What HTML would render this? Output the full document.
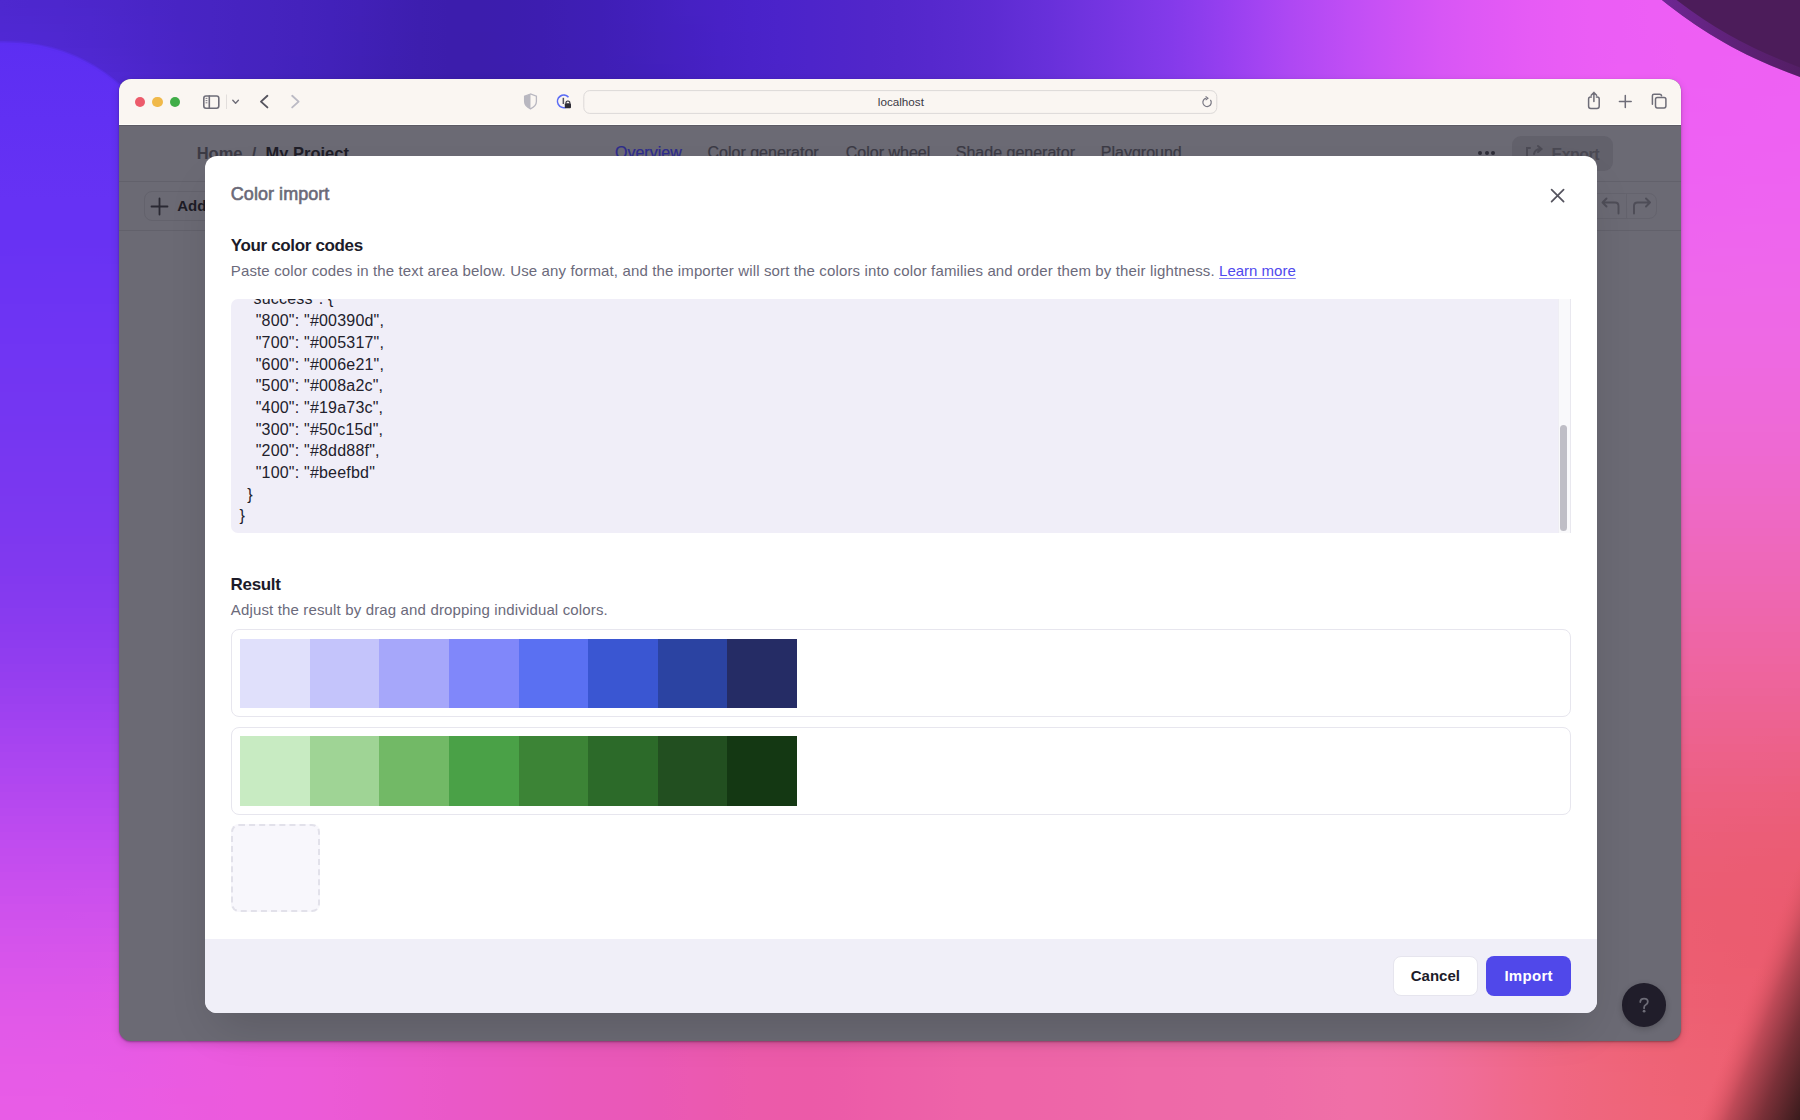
<!DOCTYPE html>
<html><head><meta charset="utf-8">
<style>
*{box-sizing:border-box;margin:0;padding:0}
html,body{width:1800px;height:1120px;overflow:hidden}
body{position:relative;-webkit-font-smoothing:antialiased;font-family:"Liberation Sans",sans-serif;background:#b048f0}
.a{position:absolute}
#bgs i{position:absolute;display:block}
.t{position:absolute;white-space:pre}
#bg{position:absolute;left:0;top:0;width:1800px;height:1120px;overflow:hidden;
background:
 radial-gradient(ellipse 520px 140px at 420px 70px, rgba(50,22,150,0.9), rgba(50,22,150,0) 100%),
 linear-gradient(128deg, #4a24c8 0%, #6a30f2 22%, #9a40f4 40%, #d452ec 55%, #ee5ae0 70%, #ee62b0 85%, #e85870 100%);
}
#win{left:119px;top:79px;width:1562px;height:962px;border-radius:12px;overflow:hidden;background:#6b6a74;
 box-shadow:0 1px 2px rgba(0,0,0,0.3),0 3px 8px rgba(0,0,0,0.14)}
#tb{left:119px;top:79px;width:1562px;height:45.5px;background:#faf6f2;border-radius:12px 12px 0 0;border-bottom:1px solid #fffefb;box-shadow:0 1px 0 #5c5a64}
.hl{left:119px;width:1562px;height:1px;background:#62616b}
#modal{left:204.5px;top:156px;width:1392.5px;height:857px;background:#fff;border-radius:12px;box-shadow:0 22px 44px -12px rgba(0,0,0,0.16)}
#foot{left:204.5px;top:939px;width:1392.5px;height:74px;background:#f0eff8;border-radius:0 0 12px 12px}
.sw{position:absolute;top:0;width:69.6px;height:69.5px}
</style></head>
<body>
<!--BG--><div id="bgs" class="a" style="left:0;top:0;width:1800px;height:1120px;overflow:hidden"><i style="left:0px;top:0px;width:1800px;height:8px;background:linear-gradient(90deg,#4e28cf 0px,#4d27ce 30px,#4d27cd 60px,#4c26cb 90px,#4b26c9 120px,#4925c6 150px,#4824c4 180px,#4724c2 210px,#4623c0 240px,#4523be 270px,#4422bc 300px,#4221ba 330px,#4120b7 360px,#3f1fb3 390px,#3d1eaf 420px,#3c1dad 450px,#3c1dad 480px,#3c1dae 510px,#3d1db0 540px,#3e1eb3 570px,#3f1eb6 600px,#411fba 630px,#4320be 660px,#4621c3 690px,#4821c6 720px,#4922c9 750px,#4b23ca 780px,#4d24ca 810px,#4f25ca 840px,#5126ca 870px,#5327cb 900px,#5628cd 930px,#592acf 960px,#5d2bd2 990px,#622ed6 1020px,#6830da 1050px,#6f33de 1080px,#7635e2 1110px,#7d38e6 1140px,#843aea 1170px,#8d3ded 1200px,#9840f0 1230px,#a344f2 1260px,#ae48f3 1290px,#b74bf4 1320px,#c04ef5 1350px,#c851f5 1380px,#d053f5 1410px,#d756f5 1440px,#dd58f5 1470px,#e259f5 1500px,#e65bf5 1530px,#e95cf5 1560px,#eb5df5 1590px,#ec5df5 1620px,#ed5ef5 1650px,#ed5ef5 1680px,#ee5ff4 1710px,#ee5ff4 1740px,#ee5ff4 1770px,#ee60f4 1800px)"></i><i style="left:0px;top:8px;width:1800px;height:8px;background:linear-gradient(90deg,#4e28d0 0px,#4e27cf 30px,#4d27ce 60px,#4c27cc 90px,#4b26c9 120px,#4925c7 150px,#4824c4 180px,#4724c2 210px,#4623c0 240px,#4523be 270px,#4422bc 300px,#4221ba 330px,#4120b7 360px,#3f1fb2 390px,#3d1eaf 420px,#3c1dad 450px,#3c1dad 480px,#3c1dae 510px,#3d1db0 540px,#3e1eb3 570px,#3f1eb6 600px,#411fba 630px,#4320be 660px,#4621c3 690px,#4821c6 720px,#4922c9 750px,#4b23ca 780px,#4d24ca 810px,#4f25ca 840px,#5126ca 870px,#5327cb 900px,#5628cd 930px,#592acf 960px,#5d2bd2 990px,#622ed6 1020px,#6830da 1050px,#6f33de 1080px,#7635e2 1110px,#7d38e6 1140px,#843aea 1170px,#8d3ded 1200px,#9840f0 1230px,#a344f2 1260px,#ae48f3 1290px,#b74bf4 1320px,#c04ef5 1350px,#c851f5 1380px,#d053f5 1410px,#d756f5 1440px,#dd58f5 1470px,#e259f5 1500px,#e65bf5 1530px,#e95cf5 1560px,#eb5df5 1590px,#ec5df5 1620px,#ed5ef5 1650px,#ee5ef5 1680px,#ee5ff4 1710px,#ee5ff4 1740px,#ee5ff4 1770px,#ee60f4 1800px)"></i><i style="left:0px;top:16px;width:1800px;height:8px;background:linear-gradient(90deg,#4f28d1 0px,#4e28d0 30px,#4e27ce 60px,#4d27cd 90px,#4b26ca 120px,#4a25c7 150px,#4824c4 180px,#4724c2 210px,#4623c0 240px,#4523be 270px,#4422bc 300px,#4221ba 330px,#4120b6 360px,#3f1fb2 390px,#3d1eaf 420px,#3c1dad 450px,#3c1dad 480px,#3c1dae 510px,#3d1db0 540px,#3e1eb3 570px,#3f1eb6 600px,#411fba 630px,#4320be 660px,#4521c2 690px,#4821c6 720px,#4922c9 750px,#4b23ca 780px,#4d24ca 810px,#4f25ca 840px,#5126ca 870px,#5327cb 900px,#5628cd 930px,#592acf 960px,#5d2bd2 990px,#622ed6 1020px,#6830da 1050px,#6f33de 1080px,#7635e2 1110px,#7d38e6 1140px,#843aea 1170px,#8d3ded 1200px,#9840f0 1230px,#a344f2 1260px,#ae48f3 1290px,#b74bf4 1320px,#c04ef5 1350px,#c851f5 1380px,#d053f5 1410px,#d756f5 1440px,#dd58f5 1470px,#e259f5 1500px,#e65bf5 1530px,#e95cf5 1560px,#eb5df5 1590px,#ec5df5 1620px,#ed5ef5 1650px,#ee5ef5 1680px,#ee5ff4 1710px,#ee5ff4 1740px,#ee5ff4 1770px,#ee60f4 1800px)"></i><i style="left:0px;top:24px;width:1800px;height:8px;background:linear-gradient(90deg,#4f28d2 0px,#4f28d1 30px,#4e28cf 60px,#4d27cd 90px,#4c26cb 120px,#4a25c8 150px,#4824c5 180px,#4724c2 210px,#4623c0 240px,#4523be 270px,#4422bc 300px,#4221ba 330px,#4120b6 360px,#3f1fb2 390px,#3d1eaf 420px,#3c1dad 450px,#3c1dad 480px,#3c1dae 510px,#3d1db0 540px,#3e1eb3 570px,#3f1eb6 600px,#411fb9 630px,#4320be 660px,#4520c2 690px,#4821c6 720px,#4922c9 750px,#4b23ca 780px,#4d24ca 810px,#4f25ca 840px,#5126ca 870px,#5327cb 900px,#5628cd 930px,#592acf 960px,#5d2bd2 990px,#622ed6 1020px,#6830da 1050px,#6f33de 1080px,#7635e2 1110px,#7d38e6 1140px,#843aea 1170px,#8d3ded 1200px,#9840f0 1230px,#a344f2 1260px,#ae48f3 1290px,#b74bf4 1320px,#c04ef5 1350px,#c851f5 1380px,#d053f5 1410px,#d756f5 1440px,#dd58f5 1470px,#e259f5 1500px,#e65bf5 1530px,#e95cf5 1560px,#eb5df5 1590px,#ec5df5 1620px,#ed5ef5 1650px,#ee5ef5 1680px,#ee5ff4 1710px,#ee5ff4 1740px,#ee60f4 1770px,#ee60f4 1800px)"></i><i style="left:0px;top:32px;width:1800px;height:8px;background:linear-gradient(90deg,#5028d3 0px,#4f28d2 30px,#4f28d0 60px,#4d27ce 90px,#4c26cb 120px,#4a25c8 150px,#4924c5 180px,#4724c2 210px,#4623c0 240px,#4523be 270px,#4422bc 300px,#4221ba 330px,#4020b6 360px,#3f1fb2 390px,#3d1eae 420px,#3c1dad 450px,#3c1dac 480px,#3c1dae 510px,#3d1db0 540px,#3e1eb3 570px,#3f1eb6 600px,#411fb9 630px,#4320bd 660px,#4520c2 690px,#4721c6 720px,#4922c8 750px,#4b23ca 780px,#4d24ca 810px,#4f25ca 840px,#5126ca 870px,#5327cb 900px,#5628cd 930px,#592acf 960px,#5d2bd2 990px,#622ed6 1020px,#6830da 1050px,#6f33de 1080px,#7635e2 1110px,#7d38e6 1140px,#843aea 1170px,#8d3ded 1200px,#9840f0 1230px,#a344f2 1260px,#ae48f3 1290px,#b74bf4 1320px,#c04ef5 1350px,#c851f5 1380px,#d053f5 1410px,#d756f5 1440px,#dd58f5 1470px,#e259f5 1500px,#e65bf5 1530px,#e95cf5 1560px,#eb5df5 1590px,#ec5df5 1620px,#ed5ef5 1650px,#ee5ef4 1680px,#ee5ff4 1710px,#ee5ff4 1740px,#ee60f4 1770px,#ee60f3 1800px)"></i><i style="left:0px;top:40px;width:1800px;height:8px;background:linear-gradient(90deg,#5029d4 0px,#5029d3 30px,#4f28d1 60px,#4e27cf 90px,#4c27cc 120px,#4b26c9 150px,#4925c5 180px,#4724c2 210px,#4623c0 240px,#4523be 270px,#4422bc 300px,#4221b9 330px,#4020b6 360px,#3e1fb2 390px,#3d1eae 420px,#3c1dac 450px,#3c1dac 480px,#3c1dae 510px,#3d1db0 540px,#3e1eb3 570px,#3f1eb5 600px,#411fb9 630px,#4320bd 660px,#4520c2 690px,#4721c6 720px,#4922c8 750px,#4b23ca 780px,#4d24ca 810px,#4f25ca 840px,#5126ca 870px,#5327cb 900px,#5628cd 930px,#592acf 960px,#5d2bd2 990px,#622ed6 1020px,#6830da 1050px,#6f33de 1080px,#7635e2 1110px,#7d38e6 1140px,#843aea 1170px,#8d3ded 1200px,#9840f0 1230px,#a344f2 1260px,#ae48f3 1290px,#b74bf4 1320px,#c04ef5 1350px,#c851f5 1380px,#d053f5 1410px,#d756f5 1440px,#dd58f5 1470px,#e259f5 1500px,#e65bf5 1530px,#e95cf5 1560px,#eb5df5 1590px,#ec5ef5 1620px,#ed5ef5 1650px,#ee5ff4 1680px,#ee5ff4 1710px,#ee5ff4 1740px,#ee60f4 1770px,#ee60f3 1800px)"></i><i style="left:0px;top:48px;width:1800px;height:8px;background:linear-gradient(90deg,#5129d5 0px,#5129d4 30px,#5028d3 60px,#4f28d0 90px,#4d27cd 120px,#4b26c9 150px,#4925c6 180px,#4724c3 210px,#4623c0 240px,#4523be 270px,#4422bc 300px,#4221b9 330px,#4020b6 360px,#3e1fb2 390px,#3d1eae 420px,#3c1dac 450px,#3c1dac 480px,#3c1dae 510px,#3d1db0 540px,#3e1eb2 570px,#3f1eb5 600px,#411fb9 630px,#4320bd 660px,#4520c2 690px,#4721c6 720px,#4922c8 750px,#4b23ca 780px,#4d24ca 810px,#4f25ca 840px,#5126ca 870px,#5327cb 900px,#5628cd 930px,#592acf 960px,#5d2bd2 990px,#622ed6 1020px,#6830da 1050px,#6f33de 1080px,#7635e2 1110px,#7d38e6 1140px,#843aea 1170px,#8d3ded 1200px,#9840f0 1230px,#a344f2 1260px,#ae48f3 1290px,#b74bf4 1320px,#c04ef5 1350px,#c851f5 1380px,#d053f5 1410px,#d756f5 1440px,#dd58f5 1470px,#e259f5 1500px,#e65bf5 1530px,#e95cf5 1560px,#eb5df5 1590px,#ec5ef5 1620px,#ed5ef5 1650px,#ee5ff4 1680px,#ee5ff4 1710px,#ee5ff4 1740px,#ee60f4 1770px,#ee60f3 1800px)"></i><i style="left:0px;top:56px;width:1800px;height:8px;background:linear-gradient(90deg,#5229d6 0px,#5129d6 30px,#5129d4 60px,#4f28d1 90px,#4e27ce 120px,#4b26ca 150px,#4925c6 180px,#4724c3 210px,#4623c0 240px,#4523be 270px,#4322bc 300px,#4221b9 330px,#4020b5 360px,#3e1fb1 390px,#3d1eae 420px,#3c1dac 450px,#3c1dac 480px,#3c1dae 510px,#3d1db0 540px,#3e1eb2 570px,#3f1eb5 600px,#401fb9 630px,#4320bd 660px,#4520c1 690px,#4721c5 720px,#4922c8 750px,#4b23ca 780px,#4d24ca 810px,#4f25ca 840px,#5126ca 870px,#5327cb 900px,#5628cd 930px,#592acf 960px,#5d2bd2 990px,#622ed6 1020px,#6830da 1050px,#6f33de 1080px,#7635e2 1110px,#7d38e6 1140px,#843aea 1170px,#8d3ded 1200px,#9840f0 1230px,#a344f2 1260px,#ae48f3 1290px,#b74bf4 1320px,#c04ef5 1350px,#c851f5 1380px,#d053f5 1410px,#d756f5 1440px,#dd58f5 1470px,#e259f5 1500px,#e65bf5 1530px,#e95cf5 1560px,#eb5df5 1590px,#ec5ef5 1620px,#ed5ef5 1650px,#ee5ff4 1680px,#ee5ff4 1710px,#ee60f4 1740px,#ee60f4 1770px,#ee60f3 1800px)"></i><i style="left:0px;top:64px;width:1800px;height:8px;background:linear-gradient(90deg,#532ad8 0px,#522ad7 30px,#5129d5 60px,#5028d3 90px,#4e27cf 120px,#4c26cb 150px,#4a25c7 180px,#4824c3 210px,#4623c0 240px,#4523be 270px,#4322bc 300px,#4221b9 330px,#4020b5 360px,#3e1fb1 390px,#3d1eae 420px,#3c1dac 450px,#3c1dac 480px,#3c1dad 510px,#3d1db0 540px,#3e1eb2 570px,#3f1eb5 600px,#401fb8 630px,#421fbd 660px,#4520c1 690px,#4721c5 720px,#4922c8 750px,#4b23c9 780px,#4d24ca 810px,#4f25ca 840px,#5126ca 870px,#5327cb 900px,#5628cd 930px,#592acf 960px,#5d2bd2 990px,#622ed6 1020px,#6830da 1050px,#6f33de 1080px,#7635e2 1110px,#7d38e6 1140px,#843aea 1170px,#8d3ded 1200px,#9840f0 1230px,#a344f2 1260px,#ae48f3 1290px,#b74bf4 1320px,#c04ef5 1350px,#c851f5 1380px,#d053f5 1410px,#d756f5 1440px,#dd58f5 1470px,#e259f5 1500px,#e65bf5 1530px,#e95cf5 1560px,#eb5df5 1590px,#ed5ef5 1620px,#ed5ef5 1650px,#ee5ff4 1680px,#ee5ff4 1710px,#ee60f4 1740px,#ee60f3 1770px,#ee60f3 1800px)"></i><i style="left:0px;top:72px;width:1800px;height:8px;background:linear-gradient(90deg,#542ad9 0px,#532ad9 30px,#5229d7 60px,#5129d4 90px,#4f28d1 120px,#4d26cc 150px,#4a25c8 180px,#4824c4 210px,#4623c1 240px,#4523be 270px,#4322bc 300px,#4221b9 330px,#4020b5 360px,#3e1fb1 390px,#3d1eae 420px,#3c1dac 450px,#3b1dac 480px,#3c1dad 510px,#3d1db0 540px,#3e1eb2 570px,#3f1eb5 600px,#401fb8 630px,#421fbc 660px,#4520c1 690px,#4721c5 720px,#4922c8 750px,#4b23c9 780px,#4d24ca 810px,#4f25ca 840px,#5126ca 870px,#5327cb 900px,#5628cd 930px,#592acf 960px,#5d2bd2 990px,#622ed6 1020px,#6830da 1050px,#6f33de 1080px,#7635e2 1110px,#7d38e6 1140px,#843aea 1170px,#8d3ded 1200px,#9840f0 1230px,#a344f2 1260px,#ae48f3 1290px,#b74bf4 1320px,#c04ef5 1350px,#c851f5 1380px,#d053f5 1410px,#d756f5 1440px,#dd58f5 1470px,#e259f5 1500px,#e65bf5 1530px,#e95cf5 1560px,#eb5df5 1590px,#ed5ef5 1620px,#ed5ef4 1650px,#ee5ff4 1680px,#ee5ff4 1710px,#ee60f4 1740px,#ee60f3 1770px,#ee60f3 1800px)"></i><i style="left:0px;top:80px;width:1800px;height:8px;background:linear-gradient(90deg,#552bdb 0px,#542ada 30px,#532ad8 60px,#5229d6 90px,#5028d2 120px,#4d27cd 150px,#4a25c8 180px,#4824c4 210px,#4623c1 240px,#4523be 270px,#4322bc 300px,#4221b9 330px,#4020b5 360px,#3e1fb1 390px,#3c1eae 420px,#3c1dac 450px,#3b1dac 480px,#3c1dad 510px,#3d1db0 540px,#3e1eb2 570px,#3f1eb5 600px,#401fb8 630px,#421fbc 660px,#4520c1 690px,#4721c5 720px,#4922c8 750px,#4b23c9 780px,#4d24ca 810px,#4f25ca 840px,#5126ca 870px,#5327cb 900px,#5628cd 930px,#592acf 960px,#5d2bd2 990px,#622ed6 1020px,#6830da 1050px,#6f33de 1080px,#7635e2 1110px,#7d38e6 1140px,#843aea 1170px,#8d3ded 1200px,#9840f0 1230px,#a344f2 1260px,#ae48f3 1290px,#b74bf4 1320px,#c04ef5 1350px,#c851f5 1380px,#d053f5 1410px,#d756f5 1440px,#dd58f5 1470px,#e259f5 1500px,#e65bf5 1530px,#e95cf5 1560px,#eb5df5 1590px,#ed5ef5 1620px,#ed5ef4 1650px,#ee5ff4 1680px,#ee5ff4 1710px,#ee60f4 1740px,#ee60f3 1770px,#ee61f3 1800px)"></i><i style="left:0px;top:88px;width:1800px;height:8px;background:linear-gradient(90deg,#562bdd 0px,#552bdc 30px,#542ada 60px,#532ad7 90px,#5128d3 120px,#4e27cf 150px,#4b26c9 180px,#4824c5 210px,#4623c1 240px,#4523be 270px,#4322bc 300px,#4221b9 330px,#4020b5 360px,#3e1fb1 390px,#3c1ead 420px,#3c1dac 450px,#3b1dac 480px,#3c1dad 510px,#3d1daf 540px,#3e1eb2 570px,#3f1eb5 600px,#401fb8 630px,#421fbc 660px,#4420c0 690px,#4721c5 720px,#4922c8 750px,#4b23c9 780px,#4d24ca 810px,#4f25ca 840px,#5126ca 870px,#5327cb 900px,#5628cd 930px,#592acf 960px,#5d2bd2 990px,#622ed6 1020px,#6830da 1050px,#6f33de 1080px,#7635e2 1110px,#7d38e6 1140px,#843aea 1170px,#8d3ded 1200px,#9840f0 1230px,#a344f2 1260px,#ae48f3 1290px,#b74bf4 1320px,#c04ef5 1350px,#c851f5 1380px,#d053f5 1410px,#d756f5 1440px,#dd58f5 1470px,#e259f5 1500px,#e65bf5 1530px,#e95cf5 1560px,#eb5df5 1590px,#ed5ef5 1620px,#ed5ff4 1650px,#ee5ff4 1680px,#ee60f4 1710px,#ee60f3 1740px,#ee60f3 1770px,#ee61f3 1800px)"></i><i style="left:0px;top:96px;width:140px;height:8px;background:linear-gradient(90deg,#572bde 0px,#562bde 30px,#552bdc 60px,#542ad9 90px,#5229d5 120px,#5028d2 140px)"></i><i style="left:1660px;top:96px;width:140px;height:8px;background:linear-gradient(90deg,#ee5ff4 0px,#ee5ff4 30px,#ee60f4 60px,#ee60f3 90px,#ee61f3 120px,#ee61f3 140px)"></i><i style="left:0px;top:104px;width:140px;height:8px;background:linear-gradient(90deg,#582ce0 0px,#572cdf 30px,#562bde 60px,#552bdb 90px,#5329d7 120px,#5128d3 140px)"></i><i style="left:1660px;top:104px;width:140px;height:8px;background:linear-gradient(90deg,#ee5ff4 0px,#ee5ff4 30px,#ee60f3 60px,#ee60f3 90px,#ee61f3 120px,#ee61f3 140px)"></i><i style="left:0px;top:112px;width:140px;height:8px;background:linear-gradient(90deg,#592ce2 0px,#582ce1 30px,#582ce0 60px,#562bdd 90px,#542ad9 120px,#5229d5 140px)"></i><i style="left:1660px;top:112px;width:140px;height:8px;background:linear-gradient(90deg,#ee5ff4 0px,#ee60f4 30px,#ee60f3 60px,#ee60f3 90px,#ee61f3 120px,#ee61f3 140px)"></i><i style="left:0px;top:120px;width:140px;height:8px;background:linear-gradient(90deg,#5a2de3 0px,#5a2de3 30px,#592ce1 60px,#582cdf 90px,#552bdb 120px,#532ad7 140px)"></i><i style="left:1660px;top:120px;width:140px;height:8px;background:linear-gradient(90deg,#ee5ff4 0px,#ee60f4 30px,#ee60f3 60px,#ee61f3 90px,#ee61f3 120px,#ee61f3 140px)"></i><i style="left:0px;top:128px;width:140px;height:8px;background:linear-gradient(90deg,#5b2de5 0px,#5b2de5 30px,#5a2de3 60px,#592ce1 90px,#572bdd 120px,#552ad9 140px)"></i><i style="left:1660px;top:128px;width:140px;height:8px;background:linear-gradient(90deg,#ee5ff4 0px,#ee60f3 30px,#ee60f3 60px,#ee61f3 90px,#ee61f3 120px,#ee61f2 140px)"></i><i style="left:0px;top:136px;width:140px;height:8px;background:linear-gradient(90deg,#5c2ee7 0px,#5c2ee6 30px,#5b2de5 60px,#5a2de3 90px,#582cdf 120px,#562bdc 140px)"></i><i style="left:1660px;top:136px;width:140px;height:8px;background:linear-gradient(90deg,#ee60f4 0px,#ee60f3 30px,#ee61f3 60px,#ee61f3 90px,#ee61f2 120px,#ee61f2 140px)"></i><i style="left:0px;top:144px;width:140px;height:8px;background:linear-gradient(90deg,#5d2ee8 0px,#5d2ee8 30px,#5d2ee7 60px,#5b2de5 90px,#5a2ce1 120px,#582bde 140px)"></i><i style="left:1660px;top:144px;width:140px;height:8px;background:linear-gradient(90deg,#ee60f4 0px,#ee60f3 30px,#ee61f3 60px,#ee61f2 90px,#ee61f2 120px,#ee62f2 140px)"></i><i style="left:0px;top:152px;width:140px;height:8px;background:linear-gradient(90deg,#5e2fea 0px,#5e2fe9 30px,#5e2ee8 60px,#5d2ee7 90px,#5b2de3 120px,#592ce0 140px)"></i><i style="left:1660px;top:152px;width:140px;height:8px;background:linear-gradient(90deg,#ee60f3 0px,#ee60f3 30px,#ee61f3 60px,#ee61f2 90px,#ee62f2 120px,#ee62f2 140px)"></i><i style="left:0px;top:160px;width:140px;height:8px;background:linear-gradient(90deg,#5f2feb 0px,#5f2feb 30px,#5f2fea 60px,#5e2ee8 90px,#5c2ee5 120px,#5b2de3 140px)"></i><i style="left:1660px;top:160px;width:140px;height:8px;background:linear-gradient(90deg,#ee60f3 0px,#ee61f3 30px,#ee61f2 60px,#ee62f2 90px,#ee62f2 120px,#ee62f2 140px)"></i><i style="left:0px;top:168px;width:140px;height:8px;background:linear-gradient(90deg,#6030ec 0px,#6030ec 30px,#602fec 60px,#5f2fea 90px,#5e2ee7 120px,#5c2ee5 140px)"></i><i style="left:1660px;top:168px;width:140px;height:8px;background:linear-gradient(90deg,#ee60f3 0px,#ee61f2 30px,#ee61f2 60px,#ee62f2 90px,#ee62f1 120px,#ee62f1 140px)"></i><i style="left:0px;top:176px;width:140px;height:8px;background:linear-gradient(90deg,#6130ee 0px,#6130ed 30px,#6130ed 60px,#612fec 90px,#5f2fe9 120px,#5e2ee7 140px)"></i><i style="left:1660px;top:176px;width:140px;height:8px;background:linear-gradient(90deg,#ee61f3 0px,#ee61f2 30px,#ee62f2 60px,#ee62f1 90px,#ee62f1 120px,#ee63f1 140px)"></i><i style="left:0px;top:184px;width:140px;height:8px;background:linear-gradient(90deg,#6230ef 0px,#6230ee 30px,#6230ee 60px,#6230ed 90px,#612feb 120px,#5f2fe9 140px)"></i><i style="left:1660px;top:184px;width:140px;height:8px;background:linear-gradient(90deg,#ee61f2 0px,#ee62f2 30px,#ee62f1 60px,#ee63f1 90px,#ee63f1 120px,#ee63f1 140px)"></i><i style="left:0px;top:192px;width:140px;height:8px;background:linear-gradient(90deg,#6331ef 0px,#6331ef 30px,#6331ef 60px,#6330ee 90px,#6230ec 120px,#612feb 140px)"></i><i style="left:1660px;top:192px;width:140px;height:8px;background:linear-gradient(90deg,#ee61f2 0px,#ee62f1 30px,#ee62f1 60px,#ee63f1 90px,#ee63f0 120px,#ee63f0 140px)"></i><i style="left:0px;top:200px;width:140px;height:8px;background:linear-gradient(90deg,#6431f0 0px,#6431f0 30px,#6431f0 60px,#6431ef 90px,#6330ee 120px,#6230ec 140px)"></i><i style="left:1660px;top:200px;width:140px;height:8px;background:linear-gradient(90deg,#ee62f1 0px,#ee62f1 30px,#ee63f0 60px,#ee63f0 90px,#ee64f0 120px,#ee64f0 140px)"></i><i style="left:0px;top:208px;width:140px;height:8px;background:linear-gradient(90deg,#6531f1 0px,#6531f1 30px,#6531f1 60px,#6531f0 90px,#6431ef 120px,#6330ee 140px)"></i><i style="left:1660px;top:208px;width:140px;height:8px;background:linear-gradient(90deg,#ee62f1 0px,#ee63f0 30px,#ee63f0 60px,#ee64f0 90px,#ee64ef 120px,#ee64ef 140px)"></i><i style="left:0px;top:216px;width:140px;height:8px;background:linear-gradient(90deg,#6631f1 0px,#6631f1 30px,#6631f1 60px,#6631f1 90px,#6531f0 120px,#6531ef 140px)"></i><i style="left:1660px;top:216px;width:140px;height:8px;background:linear-gradient(90deg,#ee63f0 0px,#ee63f0 30px,#ee64ef 60px,#ee64ef 90px,#ee64ef 120px,#ee64ef 140px)"></i><i style="left:0px;top:224px;width:140px;height:8px;background:linear-gradient(90deg,#6632f2 0px,#6732f2 30px,#6732f2 60px,#6632f1 90px,#6631f1 120px,#6631f0 140px)"></i><i style="left:1660px;top:224px;width:140px;height:8px;background:linear-gradient(90deg,#ee63f0 0px,#ee64ef 30px,#ee64ef 60px,#ee65ef 90px,#ee65ee 120px,#ee65ee 140px)"></i><i style="left:0px;top:232px;width:140px;height:8px;background:linear-gradient(90deg,#6732f2 0px,#6732f2 30px,#6732f2 60px,#6732f2 90px,#6732f1 120px,#6732f1 140px)"></i><i style="left:1660px;top:232px;width:140px;height:8px;background:linear-gradient(90deg,#ee64ef 0px,#ee64ef 30px,#ee65ee 60px,#ee65ee 90px,#ee65ee 120px,#ee65ee 140px)"></i><i style="left:0px;top:240px;width:140px;height:8px;background:linear-gradient(90deg,#6832f3 0px,#6832f3 30px,#6832f3 60px,#6832f2 90px,#6832f2 120px,#6732f1 140px)"></i><i style="left:1660px;top:240px;width:140px;height:8px;background:linear-gradient(90deg,#ee64ee 0px,#ee65ee 30px,#ee65ed 60px,#ee65ed 90px,#ee66ed 120px,#ee66ed 140px)"></i><i style="left:0px;top:248px;width:140px;height:8px;background:linear-gradient(90deg,#6832f3 0px,#6932f3 30px,#6932f3 60px,#6932f3 90px,#6932f2 120px,#6832f2 140px)"></i><i style="left:1660px;top:248px;width:140px;height:8px;background:linear-gradient(90deg,#ee65ed 0px,#ee65ed 30px,#ee66ed 60px,#ee66ed 90px,#ee66ec 120px,#ee66ec 140px)"></i><i style="left:0px;top:256px;width:140px;height:8px;background:linear-gradient(90deg,#6933f3 0px,#6933f3 30px,#6933f3 60px,#6933f3 90px,#6932f3 120px,#6932f2 140px)"></i><i style="left:1660px;top:256px;width:140px;height:8px;background:linear-gradient(90deg,#ee65ed 0px,#ee66ec 30px,#ee66ec 60px,#ee66ec 90px,#ee66ec 120px,#ee66ec 140px)"></i><i style="left:0px;top:264px;width:140px;height:8px;background:linear-gradient(90deg,#6a33f3 0px,#6a33f3 30px,#6a33f3 60px,#6a33f3 90px,#6a33f3 120px,#6a33f3 140px)"></i><i style="left:1660px;top:264px;width:140px;height:8px;background:linear-gradient(90deg,#ee66ec 0px,#ee66ec 30px,#ee66eb 60px,#ee67eb 90px,#ee67eb 120px,#ee67eb 140px)"></i><i style="left:0px;top:272px;width:140px;height:8px;background:linear-gradient(90deg,#6a33f3 0px,#6a33f3 30px,#6b33f3 60px,#6b33f3 90px,#6b33f3 120px,#6a33f3 140px)"></i><i style="left:1660px;top:272px;width:140px;height:8px;background:linear-gradient(90deg,#ee66eb 0px,#ee67eb 30px,#ee67eb 60px,#ee67ea 90px,#ee67ea 120px,#ee67ea 140px)"></i><i style="left:0px;top:280px;width:140px;height:8px;background:linear-gradient(90deg,#6b33f3 0px,#6b33f3 30px,#6b33f3 60px,#6b33f3 90px,#6b33f3 120px,#6b33f3 140px)"></i><i style="left:1660px;top:280px;width:140px;height:8px;background:linear-gradient(90deg,#ee67ea 0px,#ee67ea 30px,#ee67ea 60px,#ee67ea 90px,#ee67ea 120px,#ee67e9 140px)"></i><i style="left:0px;top:288px;width:140px;height:8px;background:linear-gradient(90deg,#6c33f3 0px,#6c33f3 30px,#6c33f3 60px,#6c33f3 90px,#6c33f3 120px,#6c33f3 140px)"></i><i style="left:1660px;top:288px;width:140px;height:8px;background:linear-gradient(90deg,#ee67e9 0px,#ee67e9 30px,#ee67e9 60px,#ee68e9 90px,#ee68e9 120px,#ee68e9 140px)"></i><i style="left:0px;top:296px;width:140px;height:8px;background:linear-gradient(90deg,#6c33f3 0px,#6c33f3 30px,#6c33f3 60px,#6c33f3 90px,#6c33f3 120px,#6c33f3 140px)"></i><i style="left:1660px;top:296px;width:140px;height:8px;background:linear-gradient(90deg,#ee68e8 0px,#ee68e8 30px,#ee68e8 60px,#ee68e8 90px,#ee68e8 120px,#ee68e8 140px)"></i><i style="left:0px;top:304px;width:140px;height:8px;background:linear-gradient(90deg,#6d34f3 0px,#6d34f3 30px,#6d34f3 60px,#6d34f3 90px,#6d34f3 120px,#6d34f3 140px)"></i><i style="left:1660px;top:304px;width:140px;height:8px;background:linear-gradient(90deg,#ee68e8 0px,#ee68e7 30px,#ee68e7 60px,#ee68e7 90px,#ee68e7 120px,#ee68e7 140px)"></i><i style="left:0px;top:312px;width:140px;height:8px;background:linear-gradient(90deg,#6d34f3 0px,#6d34f3 30px,#6e34f3 60px,#6e34f3 90px,#6e34f3 120px,#6e34f3 140px)"></i><i style="left:1660px;top:312px;width:140px;height:8px;background:linear-gradient(90deg,#ee68e7 0px,#ee68e7 30px,#ee68e6 60px,#ee68e6 90px,#ee68e6 120px,#ee68e6 140px)"></i><i style="left:0px;top:320px;width:140px;height:8px;background:linear-gradient(90deg,#6e34f3 0px,#6e34f3 30px,#6e34f3 60px,#6e34f3 90px,#6e34f3 120px,#6e34f3 140px)"></i><i style="left:1660px;top:320px;width:140px;height:8px;background:linear-gradient(90deg,#ee68e6 0px,#ee68e6 30px,#ee68e6 60px,#ee68e6 90px,#ee68e6 120px,#ee68e5 140px)"></i><i style="left:0px;top:328px;width:140px;height:8px;background:linear-gradient(90deg,#6f34f3 0px,#6f34f3 30px,#6f34f3 60px,#6f34f3 90px,#6f34f3 120px,#6f34f3 140px)"></i><i style="left:1660px;top:328px;width:140px;height:8px;background:linear-gradient(90deg,#ee68e5 0px,#ee69e5 30px,#ee69e5 60px,#ee69e5 90px,#ee69e5 120px,#ee69e5 140px)"></i><i style="left:0px;top:336px;width:140px;height:8px;background:linear-gradient(90deg,#6f34f3 0px,#6f34f3 30px,#6f34f3 60px,#6f34f3 90px,#6f34f3 120px,#6f34f3 140px)"></i><i style="left:1660px;top:336px;width:140px;height:8px;background:linear-gradient(90deg,#ee69e4 0px,#ee69e4 30px,#ee69e4 60px,#ee69e4 90px,#ee69e4 120px,#ee69e4 140px)"></i><i style="left:0px;top:344px;width:140px;height:8px;background:linear-gradient(90deg,#7035f3 0px,#7035f3 30px,#7035f3 60px,#7035f3 90px,#7035f3 120px,#7035f3 140px)"></i><i style="left:1660px;top:344px;width:140px;height:8px;background:linear-gradient(90deg,#ee69e3 0px,#ee69e3 30px,#ee69e3 60px,#ee69e3 90px,#ee69e3 120px,#ee69e3 140px)"></i><i style="left:0px;top:352px;width:140px;height:8px;background:linear-gradient(90deg,#7035f3 0px,#7035f3 30px,#7035f3 60px,#7035f3 90px,#7035f3 120px,#7035f3 140px)"></i><i style="left:1660px;top:352px;width:140px;height:8px;background:linear-gradient(90deg,#ee69e2 0px,#ee69e2 30px,#ee69e2 60px,#ee69e2 90px,#ee69e2 120px,#ee69e2 140px)"></i><i style="left:0px;top:360px;width:140px;height:8px;background:linear-gradient(90deg,#7135f3 0px,#7135f3 30px,#7135f3 60px,#7135f3 90px,#7135f3 120px,#7135f3 140px)"></i><i style="left:1660px;top:360px;width:140px;height:8px;background:linear-gradient(90deg,#ee69e1 0px,#ee69e1 30px,#ee69e1 60px,#ee69e1 90px,#ee69e1 120px,#ee69e1 140px)"></i><i style="left:0px;top:368px;width:140px;height:8px;background:linear-gradient(90deg,#7235f2 0px,#7235f2 30px,#7235f2 60px,#7235f2 90px,#7235f2 120px,#7235f2 140px)"></i><i style="left:1660px;top:368px;width:140px;height:8px;background:linear-gradient(90deg,#ee69e0 0px,#ee69e0 30px,#ee69e0 60px,#ee69df 90px,#ee69df 120px,#ee69df 140px)"></i><i style="left:0px;top:376px;width:140px;height:8px;background:linear-gradient(90deg,#7235f2 0px,#7235f2 30px,#7235f2 60px,#7235f2 90px,#7235f2 120px,#7235f2 140px)"></i><i style="left:1660px;top:376px;width:140px;height:8px;background:linear-gradient(90deg,#ee69de 0px,#ee69de 30px,#ee69de 60px,#ee69de 90px,#ee69de 120px,#ee69de 140px)"></i><i style="left:0px;top:384px;width:140px;height:8px;background:linear-gradient(90deg,#7335f2 0px,#7335f2 30px,#7335f2 60px,#7335f2 90px,#7335f2 120px,#7335f2 140px)"></i><i style="left:1660px;top:384px;width:140px;height:8px;background:linear-gradient(90deg,#ee69dd 0px,#ee69dd 30px,#ee69dd 60px,#ee69dd 90px,#ee69dd 120px,#ee69dd 140px)"></i><i style="left:0px;top:392px;width:140px;height:8px;background:linear-gradient(90deg,#7336f2 0px,#7336f2 30px,#7336f2 60px,#7336f2 90px,#7336f2 120px,#7336f2 140px)"></i><i style="left:1660px;top:392px;width:140px;height:8px;background:linear-gradient(90deg,#ee69dc 0px,#ee69dc 30px,#ee69dc 60px,#ee69dc 90px,#ee69dc 120px,#ee69dc 140px)"></i><i style="left:0px;top:400px;width:140px;height:8px;background:linear-gradient(90deg,#7436f2 0px,#7436f2 30px,#7436f2 60px,#7436f2 90px,#7436f2 120px,#7436f2 140px)"></i><i style="left:1660px;top:400px;width:140px;height:8px;background:linear-gradient(90deg,#ee69db 0px,#ee69da 30px,#ee69da 60px,#ee69da 90px,#ee69da 120px,#ee69da 140px)"></i><i style="left:0px;top:408px;width:140px;height:8px;background:linear-gradient(90deg,#7436f2 0px,#7436f2 30px,#7436f2 60px,#7436f2 90px,#7436f2 120px,#7436f2 140px)"></i><i style="left:1660px;top:408px;width:140px;height:8px;background:linear-gradient(90deg,#ee69d9 0px,#ee69d9 30px,#ee69d9 60px,#ee69d9 90px,#ee69d9 120px,#ee69d9 140px)"></i><i style="left:0px;top:416px;width:140px;height:8px;background:linear-gradient(90deg,#7536f2 0px,#7536f2 30px,#7536f2 60px,#7536f2 90px,#7536f2 120px,#7536f2 140px)"></i><i style="left:1660px;top:416px;width:140px;height:8px;background:linear-gradient(90deg,#ee69d8 0px,#ee69d8 30px,#ee69d8 60px,#ee69d8 90px,#ee69d8 120px,#ee69d8 140px)"></i><i style="left:0px;top:424px;width:140px;height:8px;background:linear-gradient(90deg,#7536f1 0px,#7536f1 30px,#7536f1 60px,#7536f1 90px,#7536f1 120px,#7536f1 140px)"></i><i style="left:1660px;top:424px;width:140px;height:8px;background:linear-gradient(90deg,#ee6ad6 0px,#ee6ad6 30px,#ee6ad6 60px,#ee6ad6 90px,#ee6ad6 120px,#ee6ad6 140px)"></i><i style="left:0px;top:432px;width:140px;height:8px;background:linear-gradient(90deg,#7636f1 0px,#7636f1 30px,#7636f1 60px,#7636f1 90px,#7636f1 120px,#7636f1 140px)"></i><i style="left:1660px;top:432px;width:140px;height:8px;background:linear-gradient(90deg,#ee69d5 0px,#ee69d5 30px,#ee69d5 60px,#ee69d5 90px,#ee69d5 120px,#ee69d5 140px)"></i><i style="left:0px;top:440px;width:140px;height:8px;background:linear-gradient(90deg,#7637f1 0px,#7637f1 30px,#7637f1 60px,#7637f1 90px,#7637f1 120px,#7637f1 140px)"></i><i style="left:1660px;top:440px;width:140px;height:8px;background:linear-gradient(90deg,#ee69d3 0px,#ee69d3 30px,#ee69d3 60px,#ee69d3 90px,#ee69d3 120px,#ee69d3 140px)"></i><i style="left:0px;top:448px;width:140px;height:8px;background:linear-gradient(90deg,#7737f1 0px,#7737f1 30px,#7737f1 60px,#7737f1 90px,#7737f1 120px,#7737f1 140px)"></i><i style="left:1660px;top:448px;width:140px;height:8px;background:linear-gradient(90deg,#ee69d2 0px,#ee69d2 30px,#ee69d2 60px,#ee69d2 90px,#ee69d2 120px,#ee69d2 140px)"></i><i style="left:0px;top:456px;width:140px;height:8px;background:linear-gradient(90deg,#7837f1 0px,#7837f1 30px,#7837f1 60px,#7837f1 90px,#7837f1 120px,#7837f1 140px)"></i><i style="left:1660px;top:456px;width:140px;height:8px;background:linear-gradient(90deg,#ee69d0 0px,#ee69d0 30px,#ee69d0 60px,#ee69d0 90px,#ee69d0 120px,#ee69d0 140px)"></i><i style="left:0px;top:464px;width:140px;height:8px;background:linear-gradient(90deg,#7837f1 0px,#7837f1 30px,#7837f1 60px,#7837f1 90px,#7837f1 120px,#7837f1 140px)"></i><i style="left:1660px;top:464px;width:140px;height:8px;background:linear-gradient(90deg,#ee69ce 0px,#ee69ce 30px,#ee69ce 60px,#ee69ce 90px,#ee69ce 120px,#ee69ce 140px)"></i><i style="left:0px;top:472px;width:140px;height:8px;background:linear-gradient(90deg,#7937f1 0px,#7937f1 30px,#7937f1 60px,#7937f1 90px,#7937f1 120px,#7937f1 140px)"></i><i style="left:1660px;top:472px;width:140px;height:8px;background:linear-gradient(90deg,#ee69cd 0px,#ee69cd 30px,#ee69cd 60px,#ee69cd 90px,#ee69cd 120px,#ee69cd 140px)"></i><i style="left:0px;top:480px;width:140px;height:8px;background:linear-gradient(90deg,#7937f0 0px,#7937f0 30px,#7937f0 60px,#7937f0 90px,#7937f0 120px,#7937f0 140px)"></i><i style="left:1660px;top:480px;width:140px;height:8px;background:linear-gradient(90deg,#ee69cb 0px,#ee69cb 30px,#ee69cb 60px,#ee69cb 90px,#ee69cb 120px,#ee69cb 140px)"></i><i style="left:0px;top:488px;width:140px;height:8px;background:linear-gradient(90deg,#7a37f0 0px,#7a37f0 30px,#7a37f0 60px,#7a37f0 90px,#7a37f0 120px,#7a37f0 140px)"></i><i style="left:1660px;top:488px;width:140px;height:8px;background:linear-gradient(90deg,#ee69c9 0px,#ee69c9 30px,#ee69c9 60px,#ee69c9 90px,#ee69c9 120px,#ee69c9 140px)"></i><i style="left:0px;top:496px;width:140px;height:8px;background:linear-gradient(90deg,#7a38f0 0px,#7a38f0 30px,#7a38f0 60px,#7a38f0 90px,#7a38f0 120px,#7a38f0 140px)"></i><i style="left:1660px;top:496px;width:140px;height:8px;background:linear-gradient(90deg,#ee69c7 0px,#ee69c7 30px,#ee69c7 60px,#ee69c7 90px,#ee69c7 120px,#ee69c7 140px)"></i><i style="left:0px;top:504px;width:140px;height:8px;background:linear-gradient(90deg,#7b38f0 0px,#7b38f0 30px,#7b38f0 60px,#7b38f0 90px,#7b38f0 120px,#7b38f0 140px)"></i><i style="left:1660px;top:504px;width:140px;height:8px;background:linear-gradient(90deg,#ee69c5 0px,#ee69c5 30px,#ee69c5 60px,#ee69c5 90px,#ee69c5 120px,#ee69c5 140px)"></i><i style="left:0px;top:512px;width:140px;height:8px;background:linear-gradient(90deg,#7c38f0 0px,#7c38f0 30px,#7c38f0 60px,#7c38f0 90px,#7c38f0 120px,#7c38f0 140px)"></i><i style="left:1660px;top:512px;width:140px;height:8px;background:linear-gradient(90deg,#ee69c4 0px,#ee69c4 30px,#ee69c4 60px,#ee69c4 90px,#ee69c4 120px,#ee69c4 140px)"></i><i style="left:0px;top:520px;width:140px;height:8px;background:linear-gradient(90deg,#7c38f0 0px,#7c38f0 30px,#7c38f0 60px,#7c38f0 90px,#7c38f0 120px,#7c38f0 140px)"></i><i style="left:1660px;top:520px;width:140px;height:8px;background:linear-gradient(90deg,#ee68c2 0px,#ee68c2 30px,#ee68c2 60px,#ee68c2 90px,#ee68c2 120px,#ee68c2 140px)"></i><i style="left:0px;top:528px;width:140px;height:8px;background:linear-gradient(90deg,#7d38f0 0px,#7d38f0 30px,#7d38f0 60px,#7d38f0 90px,#7d38f0 120px,#7d38f0 140px)"></i><i style="left:1660px;top:528px;width:140px;height:8px;background:linear-gradient(90deg,#ee68c0 0px,#ee68c0 30px,#ee68c0 60px,#ee68c0 90px,#ee68c0 120px,#ee68c0 140px)"></i><i style="left:0px;top:536px;width:140px;height:8px;background:linear-gradient(90deg,#7e38ef 0px,#7e38ef 30px,#7e38ef 60px,#7e38ef 90px,#7e38ef 120px,#7e38ef 140px)"></i><i style="left:1660px;top:536px;width:140px;height:8px;background:linear-gradient(90deg,#ee68be 0px,#ee68be 30px,#ee68be 60px,#ee68be 90px,#ee68be 120px,#ee68be 140px)"></i><i style="left:0px;top:544px;width:140px;height:8px;background:linear-gradient(90deg,#7f39ef 0px,#7f39ef 30px,#7f39ef 60px,#7f39ef 90px,#7f39ef 120px,#7f39ef 140px)"></i><i style="left:1660px;top:544px;width:140px;height:8px;background:linear-gradient(90deg,#ee68bc 0px,#ee68bc 30px,#ee68bc 60px,#ee68bc 90px,#ee68bc 120px,#ee68bc 140px)"></i><i style="left:0px;top:552px;width:140px;height:8px;background:linear-gradient(90deg,#8039ef 0px,#8039ef 30px,#8039ef 60px,#8039ef 90px,#8039ef 120px,#8039ef 140px)"></i><i style="left:1660px;top:552px;width:140px;height:8px;background:linear-gradient(90deg,#ee68ba 0px,#ee68ba 30px,#ee68ba 60px,#ee68ba 90px,#ee68ba 120px,#ee68ba 140px)"></i><i style="left:0px;top:560px;width:140px;height:8px;background:linear-gradient(90deg,#8039ef 0px,#8039ef 30px,#8039ef 60px,#8039ef 90px,#8039ef 120px,#8039ef 140px)"></i><i style="left:1660px;top:560px;width:140px;height:8px;background:linear-gradient(90deg,#ee67b8 0px,#ee67b8 30px,#ee67b8 60px,#ee67b8 90px,#ee67b8 120px,#ee67b8 140px)"></i><i style="left:0px;top:568px;width:140px;height:8px;background:linear-gradient(90deg,#8139ef 0px,#8139ef 30px,#8139ef 60px,#8139ef 90px,#8139ef 120px,#8139ef 140px)"></i><i style="left:1660px;top:568px;width:140px;height:8px;background:linear-gradient(90deg,#ee67b7 0px,#ee67b7 30px,#ee67b7 60px,#ee67b7 90px,#ee67b7 120px,#ee67b7 140px)"></i><i style="left:0px;top:576px;width:140px;height:8px;background:linear-gradient(90deg,#8339ef 0px,#8339ef 30px,#8339ef 60px,#8339ef 90px,#8339ef 120px,#8339ef 140px)"></i><i style="left:1660px;top:576px;width:140px;height:8px;background:linear-gradient(90deg,#ee67b5 0px,#ee67b5 30px,#ee67b5 60px,#ee67b5 90px,#ee67b5 120px,#ee67b5 140px)"></i><i style="left:0px;top:584px;width:140px;height:8px;background:linear-gradient(90deg,#843aef 0px,#843aef 30px,#843aef 60px,#843aef 90px,#843aef 120px,#843aef 140px)"></i><i style="left:1660px;top:584px;width:140px;height:8px;background:linear-gradient(90deg,#ee67b3 0px,#ee67b3 30px,#ee67b3 60px,#ee67b3 90px,#ee67b3 120px,#ee67b3 140px)"></i><i style="left:0px;top:592px;width:140px;height:8px;background:linear-gradient(90deg,#853aef 0px,#853aef 30px,#853aef 60px,#853aef 90px,#853aef 120px,#853aef 140px)"></i><i style="left:1660px;top:592px;width:140px;height:8px;background:linear-gradient(90deg,#ee67b1 0px,#ee67b1 30px,#ee67b1 60px,#ee67b1 90px,#ee67b1 120px,#ee67b1 140px)"></i><i style="left:0px;top:600px;width:140px;height:8px;background:linear-gradient(90deg,#863aef 0px,#863aef 30px,#863aef 60px,#863aef 90px,#863aef 120px,#863aef 140px)"></i><i style="left:1660px;top:600px;width:140px;height:8px;background:linear-gradient(90deg,#ee66af 0px,#ee66af 30px,#ee66af 60px,#ee66af 90px,#ee66af 120px,#ee66af 140px)"></i><i style="left:0px;top:608px;width:140px;height:8px;background:linear-gradient(90deg,#883bef 0px,#883bef 30px,#883bef 60px,#883bef 90px,#883bef 120px,#883bef 140px)"></i><i style="left:1660px;top:608px;width:140px;height:8px;background:linear-gradient(90deg,#ee66ad 0px,#ee66ad 30px,#ee66ad 60px,#ee66ad 90px,#ee66ad 120px,#ee66ad 140px)"></i><i style="left:0px;top:616px;width:140px;height:8px;background:linear-gradient(90deg,#893bef 0px,#893bef 30px,#893bef 60px,#893bef 90px,#893bef 120px,#893bef 140px)"></i><i style="left:1660px;top:616px;width:140px;height:8px;background:linear-gradient(90deg,#ee66ab 0px,#ee66ab 30px,#ee66ab 60px,#ee66ab 90px,#ee66ab 120px,#ee66ab 140px)"></i><i style="left:0px;top:624px;width:140px;height:8px;background:linear-gradient(90deg,#8b3bef 0px,#8b3bef 30px,#8b3bef 60px,#8b3bef 90px,#8b3bef 120px,#8b3bef 140px)"></i><i style="left:1660px;top:624px;width:140px;height:8px;background:linear-gradient(90deg,#ee66a9 0px,#ee66a9 30px,#ee66a9 60px,#ee66a9 90px,#ee66a9 120px,#ee66a9 140px)"></i><i style="left:0px;top:632px;width:140px;height:8px;background:linear-gradient(90deg,#8c3cef 0px,#8c3cef 30px,#8c3cef 60px,#8c3cef 90px,#8c3cef 120px,#8c3cef 140px)"></i><i style="left:1660px;top:632px;width:140px;height:8px;background:linear-gradient(90deg,#ee65a7 0px,#ee65a7 30px,#ee65a7 60px,#ee65a7 90px,#ee65a7 120px,#ee65a7 140px)"></i><i style="left:0px;top:640px;width:140px;height:8px;background:linear-gradient(90deg,#8e3cef 0px,#8e3cef 30px,#8e3cef 60px,#8e3cef 90px,#8e3cef 120px,#8e3cef 140px)"></i><i style="left:1660px;top:640px;width:140px;height:8px;background:linear-gradient(90deg,#ee65a5 0px,#ee65a5 30px,#ee65a5 60px,#ee65a5 90px,#ee65a5 120px,#ee65a5 140px)"></i><i style="left:0px;top:648px;width:140px;height:8px;background:linear-gradient(90deg,#903def 0px,#903def 30px,#903def 60px,#903def 90px,#903def 120px,#903def 140px)"></i><i style="left:1660px;top:648px;width:140px;height:8px;background:linear-gradient(90deg,#ee65a3 0px,#ee65a3 30px,#ee65a3 60px,#ee65a3 90px,#ee65a3 120px,#ee65a3 140px)"></i><i style="left:0px;top:656px;width:140px;height:8px;background:linear-gradient(90deg,#913def 0px,#913def 30px,#913def 60px,#913def 90px,#913def 120px,#913def 140px)"></i><i style="left:1660px;top:656px;width:140px;height:8px;background:linear-gradient(90deg,#ee65a1 0px,#ee65a1 30px,#ee65a1 60px,#ee65a1 90px,#ee65a1 120px,#ee65a1 140px)"></i><i style="left:0px;top:664px;width:140px;height:8px;background:linear-gradient(90deg,#933eef 0px,#933eef 30px,#933eef 60px,#933eef 90px,#933eef 120px,#933eef 140px)"></i><i style="left:1660px;top:664px;width:140px;height:8px;background:linear-gradient(90deg,#ee64a0 0px,#ee64a0 30px,#ee649f 60px,#ee649f 90px,#ee649f 120px,#ee649f 140px)"></i><i style="left:0px;top:672px;width:140px;height:8px;background:linear-gradient(90deg,#953eef 0px,#953eef 30px,#953eef 60px,#953eef 90px,#953eef 120px,#953eef 140px)"></i><i style="left:1660px;top:672px;width:140px;height:8px;background:linear-gradient(90deg,#ee649e 0px,#ee649e 30px,#ee649d 60px,#ee649d 90px,#ee649d 120px,#ee649d 140px)"></i><i style="left:0px;top:680px;width:140px;height:8px;background:linear-gradient(90deg,#973fef 0px,#973fef 30px,#973fef 60px,#973fef 90px,#973fef 120px,#973fef 140px)"></i><i style="left:1660px;top:680px;width:140px;height:8px;background:linear-gradient(90deg,#ee649c 0px,#ee649c 30px,#ee649b 60px,#ee649b 90px,#ee649b 120px,#ee649b 140px)"></i><i style="left:0px;top:688px;width:140px;height:8px;background:linear-gradient(90deg,#9940ef 0px,#9940ef 30px,#9940ef 60px,#9940ef 90px,#9940ef 120px,#9940ef 140px)"></i><i style="left:1660px;top:688px;width:140px;height:8px;background:linear-gradient(90deg,#ee649a 0px,#ee649a 30px,#ed6499 60px,#ed6499 90px,#ed6499 120px,#ed6399 140px)"></i><i style="left:0px;top:696px;width:140px;height:8px;background:linear-gradient(90deg,#9b40ef 0px,#9b40ef 30px,#9b40ef 60px,#9b40ef 90px,#9b40ef 120px,#9b40ef 140px)"></i><i style="left:1660px;top:696px;width:140px;height:8px;background:linear-gradient(90deg,#ed6398 0px,#ed6398 30px,#ed6397 60px,#ed6397 90px,#ed6397 120px,#ed6397 140px)"></i><i style="left:0px;top:704px;width:140px;height:8px;background:linear-gradient(90deg,#9d41f0 0px,#9d41f0 30px,#9d41f0 60px,#9d41f0 90px,#9d41f0 120px,#9d41f0 140px)"></i><i style="left:1660px;top:704px;width:140px;height:8px;background:linear-gradient(90deg,#ed6396 0px,#ed6396 30px,#ed6395 60px,#ed6395 90px,#ed6395 120px,#ed6395 140px)"></i><i style="left:0px;top:712px;width:140px;height:8px;background:linear-gradient(90deg,#9f41f0 0px,#9f41f0 30px,#9f41f0 60px,#9f41f0 90px,#a041f0 120px,#a041f0 140px)"></i><i style="left:1660px;top:712px;width:140px;height:8px;background:linear-gradient(90deg,#ed6394 0px,#ed6394 30px,#ed6393 60px,#ed6393 90px,#ed6393 120px,#ed6393 140px)"></i><i style="left:0px;top:720px;width:140px;height:8px;background:linear-gradient(90deg,#a242f0 0px,#a242f0 30px,#a242f0 60px,#a242f0 90px,#a242f0 120px,#a242f0 140px)"></i><i style="left:1660px;top:720px;width:140px;height:8px;background:linear-gradient(90deg,#ed6392 0px,#ed6292 30px,#ed6291 60px,#ed6291 90px,#ed6291 120px,#ed6290 140px)"></i><i style="left:0px;top:728px;width:140px;height:8px;background:linear-gradient(90deg,#a443f0 0px,#a443f0 30px,#a443f0 60px,#a443f0 90px,#a443f0 120px,#a443f0 140px)"></i><i style="left:1660px;top:728px;width:140px;height:8px;background:linear-gradient(90deg,#ed6290 0px,#ed6290 30px,#ed628f 60px,#ed628f 90px,#ed628e 120px,#ed628e 140px)"></i><i style="left:0px;top:736px;width:140px;height:8px;background:linear-gradient(90deg,#a643f0 0px,#a643f0 30px,#a643f0 60px,#a643f0 90px,#a643f0 120px,#a643f0 140px)"></i><i style="left:1660px;top:736px;width:140px;height:8px;background:linear-gradient(90deg,#ed628e 0px,#ed628e 30px,#ed628d 60px,#ed628d 90px,#ed618c 120px,#ed618c 140px)"></i><i style="left:0px;top:744px;width:140px;height:8px;background:linear-gradient(90deg,#a844f0 0px,#a844f0 30px,#a844f0 60px,#a844f0 90px,#a844f0 120px,#a844f0 140px)"></i><i style="left:1660px;top:744px;width:140px;height:8px;background:linear-gradient(90deg,#ed628c 0px,#ed618c 30px,#ed618b 60px,#ed618b 90px,#ed618a 120px,#ed618a 140px)"></i><i style="left:0px;top:752px;width:140px;height:8px;background:linear-gradient(90deg,#aa45f0 0px,#aa45f0 30px,#aa45f0 60px,#aa45f0 90px,#aa45f0 120px,#aa45f0 140px)"></i><i style="left:1660px;top:752px;width:140px;height:8px;background:linear-gradient(90deg,#ed618a 0px,#ed618a 30px,#ed6189 60px,#ed6189 90px,#ec6188 120px,#ec6187 140px)"></i><i style="left:0px;top:760px;width:140px;height:8px;background:linear-gradient(90deg,#ac45f0 0px,#ac45f0 30px,#ac45f0 60px,#ac45f0 90px,#ac45f0 120px,#ac45f0 140px)"></i><i style="left:1660px;top:760px;width:140px;height:8px;background:linear-gradient(90deg,#ed6188 0px,#ed6188 30px,#ec6187 60px,#ec6087 90px,#ec6086 120px,#ec6085 140px)"></i><i style="left:0px;top:768px;width:140px;height:8px;background:linear-gradient(90deg,#ae46f0 0px,#ae46f0 30px,#ae46f0 60px,#ae46f0 90px,#ae46f0 120px,#ae46f0 140px)"></i><i style="left:1660px;top:768px;width:140px;height:8px;background:linear-gradient(90deg,#ec6186 0px,#ec6086 30px,#ec6085 60px,#ec6085 90px,#ec6084 120px,#ec6083 140px)"></i><i style="left:0px;top:776px;width:140px;height:8px;background:linear-gradient(90deg,#b046f0 0px,#b046f0 30px,#b046f0 60px,#b046f0 90px,#b046ef 120px,#b046ef 140px)"></i><i style="left:1660px;top:776px;width:140px;height:8px;background:linear-gradient(90deg,#ec6084 0px,#ec6084 30px,#ec6083 60px,#ec6083 90px,#ec5f82 120px,#ec5f81 140px)"></i><i style="left:0px;top:784px;width:140px;height:8px;background:linear-gradient(90deg,#b247ef 0px,#b247ef 30px,#b247ef 60px,#b247ef 90px,#b247ef 120px,#b247ef 140px)"></i><i style="left:1660px;top:784px;width:140px;height:8px;background:linear-gradient(90deg,#ec6083 0px,#ec6082 30px,#ec5f82 60px,#ec5f81 90px,#ec5f80 120px,#ec5f7f 140px)"></i><i style="left:0px;top:792px;width:140px;height:8px;background:linear-gradient(90deg,#b448ef 0px,#b448ef 30px,#b448ef 60px,#b448ef 90px,#b448ef 120px,#b448ef 140px)"></i><i style="left:1660px;top:792px;width:140px;height:8px;background:linear-gradient(90deg,#ec5f81 0px,#ec5f80 30px,#ec5f80 60px,#ec5f7f 90px,#ec5f7e 120px,#ec5e7d 140px)"></i><i style="left:0px;top:800px;width:140px;height:8px;background:linear-gradient(90deg,#b648ef 0px,#b648ef 30px,#b648ef 60px,#b648ef 90px,#b648ef 120px,#b648ef 140px)"></i><i style="left:1660px;top:800px;width:140px;height:8px;background:linear-gradient(90deg,#ec5f7f 0px,#ec5f7f 30px,#ec5f7e 60px,#ec5f7d 90px,#ec5e7c 120px,#eb5e7c 140px)"></i><i style="left:0px;top:808px;width:140px;height:8px;background:linear-gradient(90deg,#b849ef 0px,#b849ef 30px,#b849ef 60px,#b849ef 90px,#b849ef 120px,#b849ef 140px)"></i><i style="left:1660px;top:808px;width:140px;height:8px;background:linear-gradient(90deg,#ec5f7e 0px,#ec5f7d 30px,#ec5e7c 60px,#ec5e7c 90px,#eb5e7b 120px,#eb5e7a 140px)"></i><i style="left:0px;top:816px;width:140px;height:8px;background:linear-gradient(90deg,#ba4aef 0px,#ba4aef 30px,#ba4aef 60px,#ba4aef 90px,#ba4aef 120px,#ba4aef 140px)"></i><i style="left:1660px;top:816px;width:140px;height:8px;background:linear-gradient(90deg,#ec5e7c 0px,#ec5e7c 30px,#ec5e7b 60px,#eb5e7a 90px,#eb5e79 120px,#eb5d79 140px)"></i><i style="left:0px;top:824px;width:140px;height:8px;background:linear-gradient(90deg,#bc4aef 0px,#bc4aef 30px,#bc4aef 60px,#bc4aef 90px,#bc4aef 120px,#bc4aef 140px)"></i><i style="left:1660px;top:824px;width:140px;height:8px;background:linear-gradient(90deg,#ec5e7b 0px,#ec5e7a 30px,#eb5e7a 60px,#eb5d79 90px,#eb5d78 120px,#eb5d77 140px)"></i><i style="left:0px;top:832px;width:140px;height:8px;background:linear-gradient(90deg,#be4bef 0px,#be4bef 30px,#be4bef 60px,#be4bef 90px,#be4bef 120px,#be4bef 140px)"></i><i style="left:1660px;top:832px;width:140px;height:8px;background:linear-gradient(90deg,#ec5e79 0px,#ec5e79 30px,#eb5d78 60px,#eb5d77 90px,#eb5d77 120px,#eb5d76 140px)"></i><i style="left:0px;top:840px;width:140px;height:8px;background:linear-gradient(90deg,#c04cef 0px,#c04cef 30px,#c04cef 60px,#c04cef 90px,#c04cef 120px,#c04cee 140px)"></i><i style="left:1660px;top:840px;width:140px;height:8px;background:linear-gradient(90deg,#ec5e78 0px,#eb5d78 30px,#eb5d77 60px,#eb5d76 90px,#eb5d75 120px,#eb5c75 140px)"></i><i style="left:0px;top:848px;width:140px;height:8px;background:linear-gradient(90deg,#c24cee 0px,#c24cee 30px,#c24cee 60px,#c24cee 90px,#c24cee 120px,#c24cee 140px)"></i><i style="left:1660px;top:848px;width:140px;height:8px;background:linear-gradient(90deg,#ec5d77 0px,#eb5d77 30px,#eb5d76 60px,#eb5d75 90px,#eb5c74 120px,#eb5c74 140px)"></i><i style="left:0px;top:856px;width:140px;height:8px;background:linear-gradient(90deg,#c34dee 0px,#c34dee 30px,#c34dee 60px,#c34dee 90px,#c44dee 120px,#c44dee 140px)"></i><i style="left:1660px;top:856px;width:140px;height:8px;background:linear-gradient(90deg,#ec5d76 0px,#eb5d75 30px,#eb5d75 60px,#eb5c74 90px,#eb5c73 120px,#eb5c73 140px)"></i><i style="left:0px;top:864px;width:140px;height:8px;background:linear-gradient(90deg,#c54dee 0px,#c54dee 30px,#c54eee 60px,#c54eee 90px,#c54eee 120px,#c64eee 140px)"></i><i style="left:1660px;top:864px;width:140px;height:8px;background:linear-gradient(90deg,#ec5d75 0px,#eb5d75 30px,#eb5d74 60px,#eb5c73 90px,#eb5c73 120px,#eb5c72 140px)"></i><i style="left:0px;top:872px;width:140px;height:8px;background:linear-gradient(90deg,#c74eee 0px,#c74eee 30px,#c74eee 60px,#c74eee 90px,#c74eee 120px,#c84eed 140px)"></i><i style="left:1660px;top:872px;width:140px;height:8px;background:linear-gradient(90deg,#ec5d74 0px,#eb5d74 30px,#eb5c73 60px,#eb5c73 90px,#eb5c72 120px,#ea5c71 140px)"></i><i style="left:0px;top:880px;width:140px;height:8px;background:linear-gradient(90deg,#c94fed 0px,#c94fed 30px,#c94fed 60px,#c94fed 90px,#c94fed 120px,#c94fed 140px)"></i><i style="left:1660px;top:880px;width:140px;height:8px;background:linear-gradient(90deg,#ec5d74 0px,#eb5d73 30px,#eb5c73 60px,#eb5c72 90px,#eb5c71 120px,#ea5b71 140px)"></i><i style="left:0px;top:888px;width:140px;height:8px;background:linear-gradient(90deg,#ca4fed 0px,#ca4fed 30px,#ca4fed 60px,#cb50ed 90px,#cb50ed 120px,#cb50ed 140px)"></i><i style="left:1660px;top:888px;width:140px;height:8px;background:linear-gradient(90deg,#ec5d73 0px,#eb5c73 30px,#eb5c72 60px,#eb5c71 90px,#eb5b71 120px,#ea5b70 140px)"></i><i style="left:0px;top:896px;width:140px;height:8px;background:linear-gradient(90deg,#cc50ed 0px,#cc50ed 30px,#cc50ed 60px,#cc50ed 90px,#cd50ed 120px,#cd50ec 140px)"></i><i style="left:1660px;top:896px;width:140px;height:8px;background:linear-gradient(90deg,#ec5d73 0px,#eb5c72 30px,#eb5c71 60px,#eb5c71 90px,#eb5b70 120px,#ea5b70 140px)"></i><i style="left:0px;top:904px;width:140px;height:8px;background:linear-gradient(90deg,#ce51ed 0px,#ce51ed 30px,#ce51ec 60px,#ce51ec 90px,#ce51ec 120px,#cf51ec 140px)"></i><i style="left:1660px;top:904px;width:140px;height:8px;background:linear-gradient(90deg,#ec5d72 0px,#eb5c72 30px,#eb5c71 60px,#eb5c70 90px,#eb5b70 120px,#ea5b6f 140px)"></i><i style="left:0px;top:912px;width:140px;height:8px;background:linear-gradient(90deg,#cf51ec 0px,#cf51ec 30px,#cf51ec 60px,#d052ec 90px,#d052ec 120px,#d152eb 140px)"></i><i style="left:1660px;top:912px;width:140px;height:8px;background:linear-gradient(90deg,#ec5d72 0px,#ec5c71 30px,#eb5c71 60px,#eb5c70 90px,#eb5b6f 120px,#ea5b6f 140px)"></i><i style="left:0px;top:920px;width:140px;height:8px;background:linear-gradient(90deg,#d152ec 0px,#d152ec 30px,#d152ec 60px,#d152ec 90px,#d252eb 120px,#d353eb 140px)"></i><i style="left:1660px;top:920px;width:140px;height:8px;background:linear-gradient(90deg,#ec5d72 0px,#ec5d71 30px,#eb5c70 60px,#eb5c70 90px,#eb5b6f 120px,#ea5b6f 140px)"></i><i style="left:0px;top:928px;width:140px;height:8px;background:linear-gradient(90deg,#d253ec 0px,#d253ec 30px,#d353eb 60px,#d353eb 90px,#d453eb 120px,#d553ea 140px)"></i><i style="left:1660px;top:928px;width:140px;height:8px;background:linear-gradient(90deg,#ec5d72 0px,#ec5d71 30px,#eb5c70 60px,#eb5c70 90px,#eb5b6f 120px,#eb5b6e 140px)"></i><i style="left:0px;top:936px;width:140px;height:8px;background:linear-gradient(90deg,#d453eb 0px,#d453eb 30px,#d453eb 60px,#d553eb 90px,#d554ea 120px,#d654ea 140px)"></i><i style="left:1660px;top:936px;width:140px;height:8px;background:linear-gradient(90deg,#ec5e72 0px,#ec5d71 30px,#eb5c70 60px,#eb5c6f 90px,#eb5b6f 120px,#eb5b6e 140px)"></i><i style="left:0px;top:944px;width:140px;height:8px;background:linear-gradient(90deg,#d554eb 0px,#d554eb 30px,#d654eb 60px,#d654ea 90px,#d754ea 120px,#d855e9 140px)"></i><i style="left:1660px;top:944px;width:140px;height:8px;background:linear-gradient(90deg,#ec5e72 0px,#ec5d71 30px,#ec5c70 60px,#eb5c6f 90px,#eb5b6f 120px,#eb5b6e 140px)"></i><i style="left:0px;top:952px;width:140px;height:8px;background:linear-gradient(90deg,#d754eb 0px,#d754eb 30px,#d755ea 60px,#d855ea 90px,#d955ea 120px,#da55e9 140px)"></i><i style="left:1660px;top:952px;width:140px;height:8px;background:linear-gradient(90deg,#ec5e72 0px,#ec5d71 30px,#ec5d70 60px,#eb5c6f 90px,#eb5c6f 120px,#eb5b6e 140px)"></i><i style="left:0px;top:960px;width:140px;height:8px;background:linear-gradient(90deg,#d855ea 0px,#d855ea 30px,#d955ea 60px,#d955ea 90px,#da56e9 120px,#db56e8 140px)"></i><i style="left:1660px;top:960px;width:140px;height:8px;background:linear-gradient(90deg,#ed5e72 0px,#ec5e71 30px,#ec5d70 60px,#eb5c6f 90px,#eb5c6f 120px,#eb5b6e 140px)"></i><i style="left:0px;top:968px;width:140px;height:8px;background:linear-gradient(90deg,#da56ea 0px,#da56ea 30px,#da56ea 60px,#db56e9 90px,#dc56e9 120px,#dd56e8 140px)"></i><i style="left:1660px;top:968px;width:140px;height:8px;background:linear-gradient(90deg,#ed5f73 0px,#ec5e71 30px,#ec5d70 60px,#ec5d6f 90px,#eb5c6f 120px,#eb5c6e 140px)"></i><i style="left:0px;top:976px;width:140px;height:8px;background:linear-gradient(90deg,#db56ea 0px,#db56ea 30px,#db56e9 60px,#dc56e9 90px,#dd57e8 120px,#de57e7 140px)"></i><i style="left:1660px;top:976px;width:140px;height:8px;background:linear-gradient(90deg,#ed5f73 0px,#ed5e71 30px,#ec5d70 60px,#ec5d70 90px,#eb5c6f 120px,#eb5c6e 140px)"></i><i style="left:0px;top:984px;width:140px;height:8px;background:linear-gradient(90deg,#dc57e9 0px,#dc57e9 30px,#dd57e9 60px,#dd57e9 90px,#df57e8 120px,#e057e7 140px)"></i><i style="left:1660px;top:984px;width:140px;height:8px;background:linear-gradient(90deg,#ed6073 0px,#ed5f72 30px,#ec5e71 60px,#ec5d70 90px,#ec5c6f 120px,#eb5c6e 140px)"></i><i style="left:0px;top:992px;width:140px;height:8px;background:linear-gradient(90deg,#dd57e9 0px,#de57e9 30px,#de57e9 60px,#df57e8 90px,#e058e7 120px,#e158e6 140px)"></i><i style="left:1660px;top:992px;width:140px;height:8px;background:linear-gradient(90deg,#ed6073 0px,#ed5f72 30px,#ec5e71 60px,#ec5d70 90px,#ec5d6f 120px,#eb5c6f 140px)"></i><i style="left:0px;top:1000px;width:140px;height:8px;background:linear-gradient(90deg,#df58e9 0px,#df58e9 30px,#df58e8 60px,#e058e8 90px,#e158e7 120px,#e258e6 140px)"></i><i style="left:1660px;top:1000px;width:140px;height:8px;background:linear-gradient(90deg,#ed6074 0px,#ed5f72 30px,#ed5e71 60px,#ec5e70 90px,#ec5d6f 120px,#ec5d6f 140px)"></i><i style="left:0px;top:1008px;width:140px;height:8px;background:linear-gradient(90deg,#e058e8 0px,#e058e8 30px,#e058e8 60px,#e158e7 90px,#e259e7 120px,#e359e6 140px)"></i><i style="left:1660px;top:1008px;width:140px;height:8px;background:linear-gradient(90deg,#ee6174 0px,#ed6072 30px,#ed5f71 60px,#ec5e70 90px,#ec5d70 120px,#ec5d6f 140px)"></i><i style="left:0px;top:1016px;width:140px;height:8px;background:linear-gradient(90deg,#e159e8 0px,#e159e8 30px,#e159e8 60px,#e259e7 90px,#e359e6 120px,#e459e5 140px)"></i><i style="left:1660px;top:1016px;width:140px;height:8px;background:linear-gradient(90deg,#ee6174 0px,#ed6073 30px,#ed5f71 60px,#ed5e71 90px,#ec5e70 120px,#ec5d6f 140px)"></i><i style="left:0px;top:1024px;width:1800px;height:8px;background:linear-gradient(90deg,#e259e8 0px,#e259e8 30px,#e259e7 60px,#e359e7 90px,#e459e6 120px,#e659e4 150px,#e85ae2 180px,#ea5ae0 210px,#eb5add 240px,#eb5adb 270px,#ec5ad9 300px,#ec5ad6 330px,#eb59d3 360px,#eb59cf 390px,#eb59cb 420px,#ea58c8 450px,#ea58c5 480px,#ea58c2 510px,#ea58bf 540px,#ea58bc 570px,#ea58ba 600px,#ea58b8 630px,#ea58b5 660px,#eb59b2 690px,#eb59ae 720px,#ec5aab 750px,#ec5aa9 780px,#ec5aa8 810px,#ec5ba8 840px,#ed5da8 870px,#ed5fa8 900px,#ed61a8 930px,#ee63a8 960px,#ee64a8 990px,#ee64a8 1020px,#ee65a8 1050px,#ee66a8 1080px,#ee67a8 1110px,#ee69a8 1140px,#ee69a8 1170px,#ee6aa8 1200px,#ee6ba8 1230px,#ee6ba8 1260px,#ef6ca8 1290px,#ef6ea7 1320px,#f06fa7 1350px,#f06fa5 1380px,#f06ea2 1410px,#f06d9d 1440px,#f06c96 1470px,#f06a8e 1500px,#f06887 1530px,#ef6681 1560px,#ef657c 1590px,#ee6378 1620px,#ee6275 1650px,#ee6173 1680px,#ed6072 1710px,#ed5f71 1740px,#ed5e70 1770px,#ec5e6f 1800px)"></i><i style="left:0px;top:1032px;width:1800px;height:8px;background:linear-gradient(90deg,#e259e8 0px,#e359e8 30px,#e359e7 60px,#e459e7 90px,#e55ae6 120px,#e65ae4 150px,#e85ae2 180px,#ea5adf 210px,#eb5add 240px,#eb5adb 270px,#ec5ad9 300px,#ec5ad6 330px,#eb59d3 360px,#eb59cf 390px,#eb59cb 420px,#ea58c8 450px,#ea58c5 480px,#ea58c2 510px,#ea58bf 540px,#ea58bc 570px,#ea58ba 600px,#ea58b8 630px,#ea58b5 660px,#eb59b2 690px,#eb59ae 720px,#ec5aab 750px,#ec5aa9 780px,#ec5aa8 810px,#ec5ba8 840px,#ed5da8 870px,#ed5fa8 900px,#ed61a8 930px,#ee63a8 960px,#ee64a8 990px,#ee64a8 1020px,#ee65a8 1050px,#ee66a8 1080px,#ee67a8 1110px,#ee69a8 1140px,#ee69a8 1170px,#ee6aa8 1200px,#ee6ba8 1230px,#ee6ba8 1260px,#ef6ca8 1290px,#ef6ea7 1320px,#f06fa7 1350px,#f06fa5 1380px,#f06ea2 1410px,#f06d9d 1440px,#f06c96 1470px,#f06a8f 1500px,#f06887 1530px,#ef6681 1560px,#ef657c 1590px,#ef6379 1620px,#ee6276 1650px,#ee6174 1680px,#ed6072 1710px,#ed5f71 1740px,#ed5f70 1770px,#ec5e70 1800px)"></i><i style="left:0px;top:1040px;width:1800px;height:8px;background:linear-gradient(90deg,#e35ae8 0px,#e35ae7 30px,#e45ae7 60px,#e55ae6 90px,#e65ae5 120px,#e75ae4 150px,#e95ae1 180px,#ea5adf 210px,#eb5add 240px,#ec5adb 270px,#ec5ad9 300px,#ec5ad6 330px,#eb59d3 360px,#eb59cf 390px,#eb59cb 420px,#ea58c8 450px,#ea58c5 480px,#ea58c2 510px,#ea58bf 540px,#ea58bc 570px,#ea58ba 600px,#ea58b8 630px,#ea58b5 660px,#eb59b2 690px,#eb59ae 720px,#ec5aab 750px,#ec5aa9 780px,#ec5aa8 810px,#ec5ba8 840px,#ed5da8 870px,#ed5fa8 900px,#ed61a8 930px,#ee63a8 960px,#ee64a8 990px,#ee64a8 1020px,#ee65a8 1050px,#ee66a8 1080px,#ee67a8 1110px,#ee69a8 1140px,#ee69a8 1170px,#ee6aa8 1200px,#ee6ba8 1230px,#ee6ba8 1260px,#ef6ca8 1290px,#ef6ea7 1320px,#f06fa7 1350px,#f06fa5 1380px,#f06ea2 1410px,#f06d9d 1440px,#f06c96 1470px,#f06a8f 1500px,#f06888 1530px,#ef6781 1560px,#ef657d 1590px,#ef6479 1620px,#ee6276 1650px,#ee6174 1680px,#ee6073 1710px,#ed6071 1740px,#ed5f71 1770px,#ed5e70 1800px)"></i><i style="left:0px;top:1048px;width:1800px;height:8px;background:linear-gradient(90deg,#e45ae7 0px,#e45ae7 30px,#e55ae7 60px,#e55ae6 90px,#e65ae5 120px,#e85ae3 150px,#e95ae1 180px,#ea5adf 210px,#eb5add 240px,#ec5adb 270px,#ec5ad9 300px,#ec5ad6 330px,#eb59d3 360px,#eb59cf 390px,#eb59cb 420px,#ea58c8 450px,#ea58c5 480px,#ea58c2 510px,#ea58bf 540px,#ea58bc 570px,#ea58ba 600px,#ea58b8 630px,#ea58b5 660px,#eb59b2 690px,#eb59ae 720px,#ec5aab 750px,#ec5aa9 780px,#ec5aa8 810px,#ec5ba8 840px,#ed5da8 870px,#ed5fa8 900px,#ed61a8 930px,#ee63a8 960px,#ee64a8 990px,#ee64a8 1020px,#ee65a8 1050px,#ee66a8 1080px,#ee67a8 1110px,#ee69a8 1140px,#ee69a8 1170px,#ee6aa8 1200px,#ee6ba8 1230px,#ee6ba8 1260px,#ef6ca8 1290px,#ef6ea7 1320px,#f06fa7 1350px,#f06fa5 1380px,#f06ea2 1410px,#f06d9d 1440px,#f06c96 1470px,#f06a8f 1500px,#f06888 1530px,#ef6782 1560px,#ef657d 1590px,#ef6479 1620px,#ee6376 1650px,#ee6274 1680px,#ee6173 1710px,#ed6072 1740px,#ed5f71 1770px,#ed5f70 1800px)"></i><i style="left:0px;top:1056px;width:1800px;height:8px;background:linear-gradient(90deg,#e55ae7 0px,#e55ae7 30px,#e55ae7 60px,#e65ae6 90px,#e75ae5 120px,#e85ae3 150px,#ea5ae1 180px,#eb5adf 210px,#eb5add 240px,#ec5adb 270px,#ec5ad9 300px,#ec5ad6 330px,#eb59d3 360px,#eb59cf 390px,#eb59cb 420px,#ea58c8 450px,#ea58c5 480px,#ea58c2 510px,#ea58bf 540px,#ea58bc 570px,#ea58ba 600px,#ea58b8 630px,#ea58b5 660px,#eb59b2 690px,#eb59ae 720px,#ec5aab 750px,#ec5aa9 780px,#ec5aa8 810px,#ec5ba8 840px,#ed5da8 870px,#ed5fa8 900px,#ed61a8 930px,#ee63a8 960px,#ee64a8 990px,#ee64a8 1020px,#ee65a8 1050px,#ee66a8 1080px,#ee67a8 1110px,#ee69a8 1140px,#ee69a8 1170px,#ee6aa8 1200px,#ee6ba8 1230px,#ee6ba8 1260px,#ef6ca8 1290px,#ef6ea7 1320px,#f06fa7 1350px,#f06fa5 1380px,#f06ea2 1410px,#f06d9d 1440px,#f06c96 1470px,#f06a8f 1500px,#f06888 1530px,#ef6782 1560px,#ef657d 1590px,#ef6479 1620px,#ee6377 1650px,#ee6274 1680px,#ee6173 1710px,#ee6072 1740px,#ed5f71 1770px,#ed5f70 1800px)"></i><i style="left:0px;top:1064px;width:1800px;height:8px;background:linear-gradient(90deg,#e55be7 0px,#e65be7 30px,#e65be6 60px,#e75be6 90px,#e75ae5 120px,#e95ae3 150px,#ea5ae1 180px,#eb5adf 210px,#eb5add 240px,#ec5adb 270px,#ec5ad9 300px,#ec5ad6 330px,#eb59d3 360px,#eb59cf 390px,#eb59cb 420px,#ea58c8 450px,#ea58c5 480px,#ea58c2 510px,#ea58bf 540px,#ea58bc 570px,#ea58ba 600px,#ea58b8 630px,#ea58b5 660px,#eb59b2 690px,#eb59ae 720px,#ec5aab 750px,#ec5aa9 780px,#ec5aa8 810px,#ec5ba8 840px,#ed5da8 870px,#ed5fa8 900px,#ed61a8 930px,#ee63a8 960px,#ee64a8 990px,#ee64a8 1020px,#ee65a8 1050px,#ee66a8 1080px,#ee67a8 1110px,#ee69a8 1140px,#ee69a8 1170px,#ee6aa8 1200px,#ee6ba8 1230px,#ee6ba8 1260px,#ef6ca8 1290px,#ef6ea7 1320px,#f06fa7 1350px,#f06fa5 1380px,#f06ea2 1410px,#f06d9d 1440px,#f06c97 1470px,#f06a8f 1500px,#f06888 1530px,#f06782 1560px,#ef667d 1590px,#ef647a 1620px,#ef6377 1650px,#ee6275 1680px,#ee6173 1710px,#ee6072 1740px,#ed6071 1770px,#ed5f71 1800px)"></i><i style="left:0px;top:1072px;width:1800px;height:8px;background:linear-gradient(90deg,#e65be7 0px,#e65be7 30px,#e75be6 60px,#e75be6 90px,#e85be4 120px,#e95ae3 150px,#ea5ae1 180px,#eb5adf 210px,#eb5add 240px,#ec5adb 270px,#ec5ad9 300px,#ec5ad6 330px,#eb59d3 360px,#eb59cf 390px,#eb59cb 420px,#ea58c8 450px,#ea58c5 480px,#ea58c2 510px,#ea58bf 540px,#ea58bc 570px,#ea58ba 600px,#ea58b8 630px,#ea58b5 660px,#eb59b2 690px,#eb59ae 720px,#ec5aab 750px,#ec5aa9 780px,#ec5aa8 810px,#ec5ba8 840px,#ed5da8 870px,#ed5fa8 900px,#ed61a8 930px,#ee63a8 960px,#ee64a8 990px,#ee64a8 1020px,#ee65a8 1050px,#ee66a8 1080px,#ee67a8 1110px,#ee69a8 1140px,#ee69a8 1170px,#ee6aa8 1200px,#ee6ba8 1230px,#ee6ba8 1260px,#ef6ca8 1290px,#ef6ea7 1320px,#f06fa7 1350px,#f06fa5 1380px,#f06ea2 1410px,#f06d9d 1440px,#f06c97 1470px,#f06a8f 1500px,#f06888 1530px,#f06782 1560px,#ef667e 1590px,#ef657a 1620px,#ef6377 1650px,#ee6275 1680px,#ee6173 1710px,#ee6172 1740px,#ee6071 1770px,#ed5f71 1800px)"></i><i style="left:0px;top:1080px;width:1800px;height:8px;background:linear-gradient(90deg,#e75be7 0px,#e75be7 30px,#e75be6 60px,#e85be5 90px,#e85be4 120px,#e95be3 150px,#ea5ae1 180px,#eb5adf 210px,#ec5add 240px,#ec5adb 270px,#ec5ad9 300px,#ec5ad6 330px,#eb59d3 360px,#eb59cf 390px,#eb59cb 420px,#ea58c8 450px,#ea58c5 480px,#ea58c2 510px,#ea58bf 540px,#ea58bc 570px,#ea58ba 600px,#ea58b8 630px,#ea58b5 660px,#eb59b2 690px,#eb59ae 720px,#ec5aab 750px,#ec5aa9 780px,#ec5aa8 810px,#ec5ba8 840px,#ed5da8 870px,#ed5fa8 900px,#ed61a8 930px,#ee63a8 960px,#ee64a8 990px,#ee64a8 1020px,#ee65a8 1050px,#ee66a8 1080px,#ee67a8 1110px,#ee69a8 1140px,#ee69a8 1170px,#ee6aa8 1200px,#ee6ba8 1230px,#ee6ba8 1260px,#ef6ca8 1290px,#ef6ea7 1320px,#f06fa7 1350px,#f06fa5 1380px,#f06ea2 1410px,#f06d9d 1440px,#f06c97 1470px,#f06a8f 1500px,#f06988 1530px,#f06783 1560px,#ef667e 1590px,#ef657a 1620px,#ef6477 1650px,#ee6375 1680px,#ee6274 1710px,#ee6172 1740px,#ee6072 1770px,#ed6071 1800px)"></i><i style="left:0px;top:1088px;width:1800px;height:8px;background:linear-gradient(90deg,#e75be7 0px,#e75be6 30px,#e85be6 60px,#e85be5 90px,#e95be4 120px,#ea5be2 150px,#eb5ae0 180px,#eb5adf 210px,#ec5add 240px,#ec5adb 270px,#ec5ad9 300px,#ec5ad6 330px,#eb59d3 360px,#eb59cf 390px,#eb59cb 420px,#ea58c8 450px,#ea58c5 480px,#ea58c2 510px,#ea58bf 540px,#ea58bc 570px,#ea58ba 600px,#ea58b8 630px,#ea58b5 660px,#eb59b2 690px,#eb59ae 720px,#ec5aab 750px,#ec5aa9 780px,#ec5aa8 810px,#ec5ba8 840px,#ed5da8 870px,#ed5fa8 900px,#ed61a8 930px,#ee63a8 960px,#ee64a8 990px,#ee64a8 1020px,#ee65a8 1050px,#ee66a8 1080px,#ee67a8 1110px,#ee69a8 1140px,#ee69a8 1170px,#ee6aa8 1200px,#ee6ba8 1230px,#ee6ba8 1260px,#ef6ca8 1290px,#ef6ea7 1320px,#f06fa7 1350px,#f06fa5 1380px,#f06ea2 1410px,#f06d9d 1440px,#f06c97 1470px,#f06a8f 1500px,#f06988 1530px,#f06783 1560px,#ef667e 1590px,#ef657a 1620px,#ef6477 1650px,#ee6375 1680px,#ee6274 1710px,#ee6173 1740px,#ee6072 1770px,#ee6071 1800px)"></i><i style="left:0px;top:1096px;width:1800px;height:8px;background:linear-gradient(90deg,#e85ce7 0px,#e85ce6 30px,#e85ce6 60px,#e85be5 90px,#e95be4 120px,#ea5be2 150px,#eb5ae0 180px,#eb5ade 210px,#ec5add 240px,#ec5adb 270px,#ec5ad9 300px,#ec5ad6 330px,#eb59d3 360px,#eb59cf 390px,#eb59cb 420px,#ea58c8 450px,#ea58c5 480px,#ea58c2 510px,#ea58bf 540px,#ea58bc 570px,#ea58ba 600px,#ea58b8 630px,#ea58b5 660px,#eb59b2 690px,#eb59ae 720px,#ec5aab 750px,#ec5aa9 780px,#ec5aa8 810px,#ec5ba8 840px,#ed5da8 870px,#ed5fa8 900px,#ed61a8 930px,#ee63a8 960px,#ee64a8 990px,#ee64a8 1020px,#ee65a8 1050px,#ee66a8 1080px,#ee67a8 1110px,#ee69a8 1140px,#ee69a8 1170px,#ee6aa8 1200px,#ee6ba8 1230px,#ee6ba8 1260px,#ef6ca8 1290px,#ef6ea7 1320px,#f06fa7 1350px,#f06fa5 1380px,#f06ea2 1410px,#f06d9d 1440px,#f06c97 1470px,#f06a8f 1500px,#f06988 1530px,#f06783 1560px,#ef667e 1590px,#ef657a 1620px,#ef6478 1650px,#ef6375 1680px,#ee6274 1710px,#ee6173 1740px,#ee6172 1770px,#ee6071 1800px)"></i><i style="left:0px;top:1104px;width:1800px;height:8px;background:linear-gradient(90deg,#e85ce6 0px,#e85ce6 30px,#e85ce6 60px,#e95be5 90px,#e95be4 120px,#ea5be2 150px,#eb5be0 180px,#eb5ade 210px,#ec5add 240px,#ec5adb 270px,#ec5ad9 300px,#ec5ad6 330px,#eb59d3 360px,#eb59cf 390px,#eb59cb 420px,#ea58c8 450px,#ea58c5 480px,#ea58c2 510px,#ea58bf 540px,#ea58bc 570px,#ea58ba 600px,#ea58b8 630px,#ea58b5 660px,#eb59b2 690px,#eb59ae 720px,#ec5aab 750px,#ec5aa9 780px,#ec5aa8 810px,#ec5ba8 840px,#ed5da8 870px,#ed5fa8 900px,#ed61a8 930px,#ee63a8 960px,#ee64a8 990px,#ee64a8 1020px,#ee65a8 1050px,#ee66a8 1080px,#ee67a8 1110px,#ee69a8 1140px,#ee69a8 1170px,#ee6aa8 1200px,#ee6ba8 1230px,#ee6ba8 1260px,#ef6ca8 1290px,#ef6ea7 1320px,#f06fa7 1350px,#f06fa5 1380px,#f06ea2 1410px,#f06d9d 1440px,#f06c97 1470px,#f06a8f 1500px,#f06989 1530px,#f06783 1560px,#ef667e 1590px,#ef657b 1620px,#ef6478 1650px,#ef6376 1680px,#ee6274 1710px,#ee6173 1740px,#ee6172 1770px,#ee6071 1800px)"></i><i style="left:0px;top:1112px;width:1800px;height:8px;background:linear-gradient(90deg,#e85ce6 0px,#e85ce6 30px,#e95ce6 60px,#e95ce5 90px,#ea5be4 120px,#ea5be2 150px,#eb5be0 180px,#eb5ade 210px,#ec5add 240px,#ec5adb 270px,#ec5ad9 300px,#ec5ad6 330px,#eb59d3 360px,#eb59cf 390px,#eb59cb 420px,#ea58c8 450px,#ea58c5 480px,#ea58c2 510px,#ea58bf 540px,#ea58bc 570px,#ea58ba 600px,#ea58b8 630px,#ea58b5 660px,#eb59b2 690px,#eb59ae 720px,#ec5aab 750px,#ec5aa9 780px,#ec5aa8 810px,#ec5ba8 840px,#ed5da8 870px,#ed5fa8 900px,#ed61a8 930px,#ee63a8 960px,#ee64a8 990px,#ee64a8 1020px,#ee65a8 1050px,#ee66a8 1080px,#ee67a8 1110px,#ee69a8 1140px,#ee69a8 1170px,#ee6aa8 1200px,#ee6ba8 1230px,#ee6ba8 1260px,#ef6ca8 1290px,#ef6ea7 1320px,#f06fa7 1350px,#f06fa5 1380px,#f06ea2 1410px,#f06d9d 1440px,#f06c97 1470px,#f06a8f 1500px,#f06989 1530px,#f06783 1560px,#ef667e 1590px,#ef657b 1620px,#ef6478 1650px,#ef6376 1680px,#ee6274 1710px,#ee6273 1740px,#ee6172 1770px,#ee6071 1800px)"></i></div><svg class="a" style="left:0;top:0" width="1800" height="1120" viewBox="0 0 1800 1120">
<defs>
 <linearGradient id="lb" x1="0" y1="40" x2="0" y2="200" gradientUnits="userSpaceOnUse"><stop offset="0" stop-color="#5c2ef2"/><stop offset="1" stop-color="#6632f4"/></linearGradient>
 <linearGradient id="dc" x1="1745" y1="1000" x2="1838" y2="1036" gradientUnits="userSpaceOnUse"><stop offset="0" stop-color="#e85868" stop-opacity="0"/><stop offset="0.27" stop-color="#c04a58"/><stop offset="0.58" stop-color="#7a3038"/><stop offset="1" stop-color="#301818"/></linearGradient>
</defs>
<path d="M-10 43 C40 40 90 52 135 100 L135 240 L-10 240 Z" fill="url(#lb)"/>
<path d="M-10 43 C40 40 90 52 135 100" fill="none" stroke="#5a2ef0" stroke-opacity="0.5" stroke-width="3"/>
<path d="M1662 0 C1702 32 1742 56 1800 77 L1800 0 Z" fill="#4c1c5a"/>
<clipPath id="bc"><path d="M1662 0 C1702 32 1742 56 1800 77 L1800 0 Z"/></clipPath><linearGradient id="bandg" x1="1662" y1="0" x2="1800" y2="0" gradientUnits="userSpaceOnUse"><stop offset="0" stop-color="#7a2aa8" stop-opacity="0.75"/><stop offset="1" stop-color="#6a2488" stop-opacity="0.25"/></linearGradient><path d="M1662 0 C1702 32 1742 56 1800 77" fill="none" stroke="url(#bandg)" stroke-width="18" clip-path="url(#bc)"/>

<rect x="1640" y="780" width="170" height="350" fill="url(#dc)"/>
</svg><!--/BG-->
<div id="win" class="a"></div>
<div id="tb" class="a"></div>
<!-- traffic lights -->
<div class="a" style="left:135px;top:96.8px;width:10.2px;height:10.2px;border-radius:50%;background:#ec5b6b"></div>
<div class="a" style="left:152.4px;top:96.8px;width:10.2px;height:10.2px;border-radius:50%;background:#f0b94a"></div>
<div class="a" style="left:169.8px;top:96.8px;width:10.2px;height:10.2px;border-radius:50%;background:#40ad48"></div>
<!-- titlebar icons -->
<svg class="a" style="left:0;top:0" width="1800" height="130" viewBox="0 0 1800 130">
 <g fill="none" stroke="#6e6d78" stroke-width="1.6" stroke-linecap="round" stroke-linejoin="round">
  <rect x="203.8" y="96" width="15" height="12.2" rx="2.2"/>
  <line x1="209.3" y1="96" x2="209.3" y2="108.2"/>
  <path d="M232.8 100.3 L235.6 103.2 L238.4 100.3" stroke-width="1.4"/>
  <path d="M267.4 95.8 L261 101.6 L267.4 107.4" stroke="#55545e" stroke-width="1.9"/>
  <path d="M292.2 95.8 L298.6 101.6 L292.2 107.4" stroke="#bbbac4" stroke-width="1.9"/>
  <path d="M1591.4 96.9 L1590.6 96.9 Q1588.6 96.9 1588.6 98.9 L1588.6 106.2 Q1588.6 108.4 1590.8 108.4 L1597 108.4 Q1599.2 108.4 1599.2 106.2 L1599.2 98.9 Q1599.2 96.9 1597.2 96.9 L1596.4 96.9" stroke-width="1.5"/>
  <path d="M1593.9 101.5 L1593.9 92.6 M1591.2 95.2 L1593.9 92.4 L1596.6 95.2" stroke-width="1.5"/>
  <path d="M1625.3 95.6 L1625.3 107.4 M1619.4 101.5 L1631.2 101.5" stroke-width="1.5"/>
  <rect x="1655.5" y="97.5" width="10.4" height="10.4" rx="1.8" stroke-width="1.5"/>
  <path d="M1652.4 104.3 L1652.4 95.8 Q1652.4 94.2 1654 94.2 L1659.6 94.2 Q1661.4 94.2 1661.6 95.8" stroke-width="1.5"/>
 </g>
 <line x1="226.5" y1="94.5" x2="226.5" y2="109" stroke="#e2dedc" stroke-width="1"/>
 <g stroke="#6e6d78" stroke-width="0.9"><line x1="205.6" y1="98.4" x2="207.4" y2="98.4"/><line x1="205.6" y1="100.6" x2="207.4" y2="100.6"/><line x1="205.6" y1="102.8" x2="207.4" y2="102.8"/></g>
 <!-- shield -->
 <path d="M530.5 94 L524.6 96.2 L524.6 101.6 Q524.6 106.2 530.5 108.8 Q536.4 106.2 536.4 101.6 L536.4 96.2 Z" fill="none" stroke="#b8b7c0" stroke-width="1.3"/>
 <path d="M530.5 94 L524.6 96.2 L524.6 101.6 Q524.6 106.2 530.5 108.8 Z" fill="#b8b7c0"/>
 <!-- privacy icon -->
 <path d="M568.5 97.2 A6.3 6.3 0 1 0 566.2 107.2" fill="none" stroke="#5b6cf5" stroke-width="1.6"/>
 <rect x="562.6" y="97.8" width="1.5" height="6.2" fill="#55545e"/>
 <rect x="564.8" y="103.2" width="6.2" height="5" rx="1" fill="#2e2d36"/>
 <path d="M566 103.4 L566 102.2 Q567.9 99.8 569.8 102.2 L569.8 103.4" fill="none" stroke="#2e2d36" stroke-width="1.1"/>
 <!-- url field -->
 <rect x="583.8" y="90.6" width="633" height="22.8" rx="6" fill="#faf6f2" stroke="#dcd9d8" stroke-width="1"/>
 <path d="M1210.4 99.8 A4.2 4.2 0 1 1 1206.4 98.2" fill="none" stroke="#7a7984" stroke-width="1.2"/>
 <path d="M1205.6 96.4 L1208 98.2 L1205.6 100.2" fill="none" stroke="#7a7984" stroke-width="1.1"/>
</svg>
<div class="t" style="left:877.8px;top:94.8px;font-size:11.7px;line-height:14px;color:#3a3945">localhost</div>

<!-- app header (dimmed) -->
<div class="a hl" style="top:181px"></div>
<div class="a hl" style="top:230px"></div>
<div class="t" style="left:196.7px;top:142.9px;font-size:16.5px;line-height:20px;font-weight:700;color:#3b3a44">Home  /  <span style="color:#1f1e28">My Project</span></div>
<div class="t" style="left:615px;top:142.9px;font-size:16px;line-height:20px;-webkit-text-stroke:0.25px currentColor;color:#2e2c8c">Overview</div>
<div class="t" style="left:707.5px;top:142.9px;font-size:16px;line-height:20px;-webkit-text-stroke:0.25px currentColor;color:#3b3a45">Color generator</div>
<div class="t" style="left:845.8px;top:142.9px;font-size:16px;line-height:20px;-webkit-text-stroke:0.25px currentColor;color:#3b3a45">Color wheel</div>
<div class="t" style="left:955.8px;top:142.9px;font-size:16px;line-height:20px;-webkit-text-stroke:0.25px currentColor;color:#3b3a45">Shade generator</div>
<div class="t" style="left:1100.8px;top:142.9px;font-size:16px;line-height:20px;-webkit-text-stroke:0.25px currentColor;color:#3b3a45">Playground</div>
<div class="a" style="left:1478px;top:151.3px;width:4px;height:4px;border-radius:50%;background:#2f2e38"></div>
<div class="a" style="left:1484.5px;top:151.3px;width:4px;height:4px;border-radius:50%;background:#2f2e38"></div>
<div class="a" style="left:1491px;top:151.3px;width:4px;height:4px;border-radius:50%;background:#2f2e38"></div>
<div class="a" style="left:1512.2px;top:135.8px;width:101px;height:35px;border-radius:9px;background:#62616b"></div>
<svg class="a" style="left:1524px;top:140px" width="22" height="22" viewBox="0 0 22 22"><path d="M6 8 L3 8 L3 19 M10 14 Q11 9 17 9 M14 6 L17.5 9 L14 12" fill="none" stroke="#4c4b55" stroke-width="2" stroke-linecap="round"/></svg>
<div class="t" style="left:1551.5px;top:144.8px;font-size:16px;line-height:20px;font-weight:700;letter-spacing:-0.5px;color:#4a4953">Export</div>
<div class="a" style="left:143.6px;top:190.7px;width:120px;height:30.7px;border-radius:8px;border:1px solid #63626c"></div>
<svg class="a" style="left:150px;top:197px" width="19" height="19" viewBox="0 0 19 19"><path d="M9.5 1.5 L9.5 17.5 M1.5 9.5 L17.5 9.5" stroke="#2a2933" stroke-width="1.8" stroke-linecap="round"/></svg>
<div class="t" style="left:177.2px;top:196.3px;font-size:15px;line-height:20px;font-weight:700;color:#1d1c26">Add</div>
<div class="a" style="left:1560px;top:192.8px;width:97.2px;height:26.4px;border-radius:8px;border:1px solid #64636d"></div>
<div class="a" style="left:1626.4px;top:193px;width:1px;height:26px;background:#64636d"></div>
<svg class="a" style="left:1598px;top:194px" width="60" height="24" viewBox="0 0 60 24">
 <g fill="none" stroke="#4e4d57" stroke-width="1.9" stroke-linecap="round" stroke-linejoin="round">
  <path d="M8.5 4.5 L4.5 8.5 L8.5 12.5 M4.5 8.5 L17 8.5 Q20.5 8.5 20.5 12 L20.5 19.5"/>
  <path d="M48 4.5 L52 8.5 L48 12.5 M52 8.5 L39.5 8.5 Q36 8.5 36 12 L36 19.5"/>
 </g>
</svg>

<!-- help button -->
<div class="a" style="left:1622px;top:983.2px;width:43.6px;height:43.6px;border-radius:50%;background:#201d2a;box-shadow:0 2px 6px rgba(0,0,0,0.2)"></div>
<svg class="a" style="left:1630px;top:990px" width="30" height="30" viewBox="1630 990 30 30"><path d="M1640.3 1002 Q1640.3 998.6 1644.1 998.6 Q1647.8 998.6 1647.8 1001.8 Q1647.8 1003.6 1645.8 1004.7 Q1644.1 1005.6 1644.1 1007.6 L1644.1 1008.2" fill="none" stroke="#6d6c77" stroke-width="1.8" stroke-linecap="round"/><circle cx="1644.1" cy="1011.2" r="1.4" fill="#6d6c77"/></svg>

<!-- modal -->
<div id="modal" class="a"></div>
<div id="foot" class="a"></div>
<!-- modal content -->
<div class="t" style="left:230.8px;top:182.5px;font-size:18px;line-height:22px;font-weight:400;letter-spacing:0.05px;-webkit-text-stroke:0.6px #6b6a78;color:#6b6a78">Color import</div>
<svg class="a" style="left:1549px;top:186.5px" width="17" height="17" viewBox="0 0 17 17"><path d="M2.6 2.6 L14.6 14.6 M14.6 2.6 L2.6 14.6" stroke="#55545f" stroke-width="1.7" stroke-linecap="round"/></svg>
<div class="t" style="left:230.8px;top:235.8px;font-size:17px;line-height:20px;font-weight:700;letter-spacing:-0.35px;color:#1c1b29">Your color codes</div>
<div class="t" style="left:230.8px;top:262.4px;font-size:15px;line-height:18px;letter-spacing:0.14px;color:#6b6a7b">Paste color codes in the text area below. Use any format, and the importer will sort the colors into color families and order them by their lightness. <span style="color:#5048ee;text-decoration:underline;text-decoration-color:rgba(80,72,238,0.7);text-underline-offset:2px;letter-spacing:0">Learn more</span></div>
<div class="a" style="left:230.5px;top:299.4px;width:1340px;height:233.6px;border-radius:7px 0 0 7px;background:#f0eef8;overflow:hidden">
 <div class="t" style="left:17.2px;top:-11.00px;font-size:16px;line-height:21.71px;letter-spacing:0.2px;color:#22212c">&quot;success&quot;: {</div>
<div class="t" style="left:25.2px;top:10.71px;font-size:16px;line-height:21.71px;letter-spacing:0.2px;color:#22212c">&quot;800&quot;: &quot;#00390d&quot;,</div>
<div class="t" style="left:25.2px;top:32.42px;font-size:16px;line-height:21.71px;letter-spacing:0.2px;color:#22212c">&quot;700&quot;: &quot;#005317&quot;,</div>
<div class="t" style="left:25.2px;top:54.13px;font-size:16px;line-height:21.71px;letter-spacing:0.2px;color:#22212c">&quot;600&quot;: &quot;#006e21&quot;,</div>
<div class="t" style="left:25.2px;top:75.84px;font-size:16px;line-height:21.71px;letter-spacing:0.2px;color:#22212c">&quot;500&quot;: &quot;#008a2c&quot;,</div>
<div class="t" style="left:25.2px;top:97.55px;font-size:16px;line-height:21.71px;letter-spacing:0.2px;color:#22212c">&quot;400&quot;: &quot;#19a73c&quot;,</div>
<div class="t" style="left:25.2px;top:119.26px;font-size:16px;line-height:21.71px;letter-spacing:0.2px;color:#22212c">&quot;300&quot;: &quot;#50c15d&quot;,</div>
<div class="t" style="left:25.2px;top:140.97px;font-size:16px;line-height:21.71px;letter-spacing:0.2px;color:#22212c">&quot;200&quot;: &quot;#8dd88f&quot;,</div>
<div class="t" style="left:25.2px;top:162.68px;font-size:16px;line-height:21.71px;letter-spacing:0.2px;color:#22212c">&quot;100&quot;: &quot;#beefbd&quot;</div>
<div class="t" style="left:16.8px;top:184.39px;font-size:16px;line-height:21.71px;letter-spacing:0.2px;color:#22212c">}</div>
<div class="t" style="left:8.9px;top:206.10px;font-size:16px;line-height:21.71px;letter-spacing:0.2px;color:#22212c">}</div>
 <div class="a" style="left:1327px;top:0;width:13px;height:233.6px;background:#f9f9fb;border-left:1px solid #efeef4;border-right:1px solid #e9e8ef"></div>
 <div class="a" style="left:1329.7px;top:125.6px;width:7.2px;height:106px;border-radius:4px;background:#bfbec6"></div>
</div>
<div class="t" style="left:230.6px;top:575.2px;font-size:17px;line-height:20px;font-weight:700;letter-spacing:-0.35px;color:#1c1b29">Result</div>
<div class="t" style="left:230.8px;top:601.2px;font-size:15px;line-height:18px;letter-spacing:0.15px;color:#6b6a7b">Adjust the result by drag and dropping individual colors.</div>
<div class="a" style="left:230.6px;top:629.3px;width:1340.4px;height:88.2px;border-radius:8px;border:1px solid #e7e6ee"></div>
<div class="a" style="left:240.2px;top:638.9px;width:557px;height:69.5px">
 <div class="sw" style="left:0;background:#e0e0fb"></div>
 <div class="sw" style="left:69.6px;background:#c4c4fb"></div>
 <div class="sw" style="left:139.2px;background:#a6a7fa"></div>
 <div class="sw" style="left:208.8px;background:#8087fa"></div>
 <div class="sw" style="left:278.4px;background:#5a70f2"></div>
 <div class="sw" style="left:348px;background:#3a56d2"></div>
 <div class="sw" style="left:417.6px;background:#2b43a2"></div>
 <div class="sw" style="left:487.2px;background:#252c65"></div>
</div>
<div class="a" style="left:230.6px;top:727.1px;width:1340.4px;height:88px;border-radius:8px;border:1px solid #e7e6ee"></div>
<div class="a" style="left:240.2px;top:736.2px;width:557px;height:69.5px">
 <div class="sw" style="left:0;background:#c8ebc2"></div>
 <div class="sw" style="left:69.6px;background:#9fd495"></div>
 <div class="sw" style="left:139.2px;background:#72b966"></div>
 <div class="sw" style="left:208.8px;background:#4aa147"></div>
 <div class="sw" style="left:278.4px;background:#3c8436"></div>
 <div class="sw" style="left:348px;background:#2c6a29"></div>
 <div class="sw" style="left:417.6px;background:#224f20"></div>
 <div class="sw" style="left:487.2px;background:#143813"></div>
</div>
<div class="a" style="left:230.7px;top:824.2px;width:89px;height:88.3px;border-radius:8px;border:2px dashed #e2e1ea;background:#f8f7fc"></div>
<!-- footer buttons -->
<div class="a" style="left:1393.1px;top:956.4px;width:84.6px;height:39.2px;border-radius:8px;background:#fff;border:1px solid #e6e5ee"></div>
<div class="t" style="left:1393.1px;top:956.4px;width:84.6px;text-align:center;font-size:15px;line-height:39.2px;font-weight:700;color:#1c1b29">Cancel</div>
<div class="a" style="left:1486.4px;top:956.4px;width:84.5px;height:39.2px;border-radius:8px;background:#5048ea"></div>
<div class="t" style="left:1486.4px;top:956.4px;width:84.5px;text-align:center;font-size:15px;line-height:39.2px;font-weight:700;letter-spacing:0.3px;color:#fff">Import</div>
</body></html>
